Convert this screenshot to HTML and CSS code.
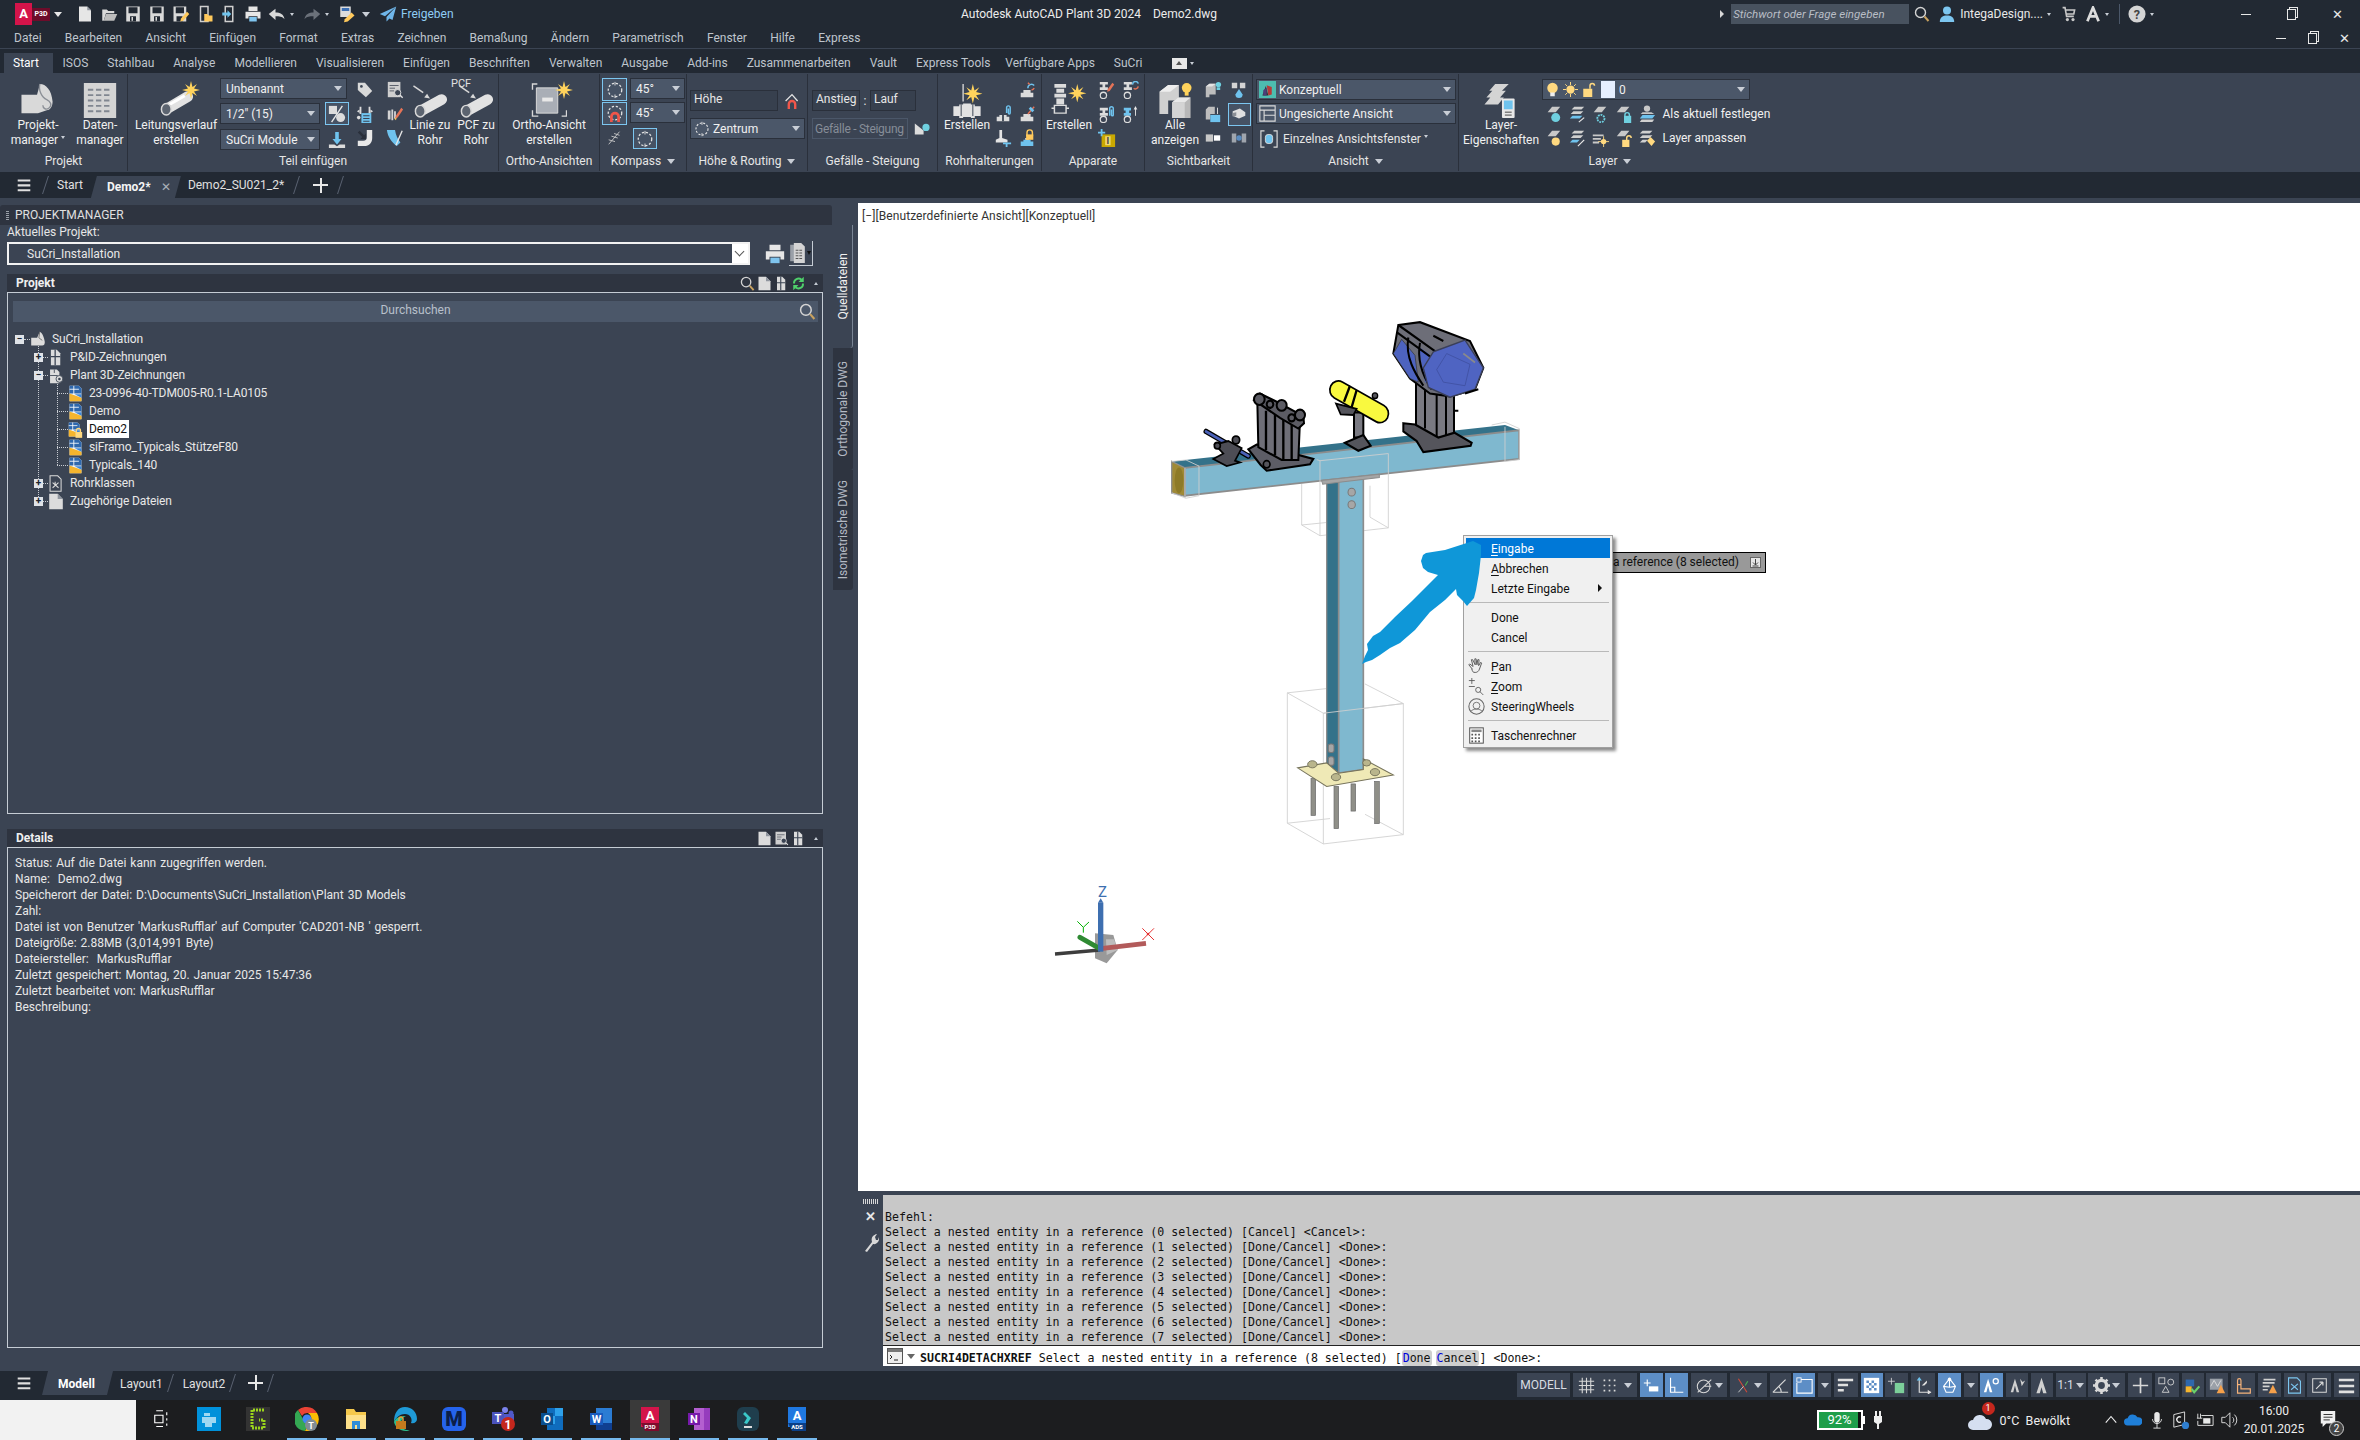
FILE: index.html
```html
<!DOCTYPE html>
<html lang="de">
<head>
<meta charset="utf-8">
<title>Autodesk AutoCAD Plant 3D 2024 Demo2.dwg</title>
<link rel="stylesheet" href="styles.css">
</head>
<body>
<svg class="sprite" xmlns="http://www.w3.org/2000/svg">
<symbol id="doc" viewBox="0 0 24 24"><path fill="#e6e6e6" d="M4 2h11l5 5v15H4z"/><path fill="#8f959e" d="M15 2v5h5z"/></symbol>
<symbol id="folder" viewBox="0 0 24 24"><path fill="#d9d9d9" d="M3 6h6l2 2h8v3H8L5 21H3z"/><path fill="#bdbdbd" d="M8 12h15l-4 9H5z"/></symbol>
<symbol id="save" viewBox="0 0 24 24"><path fill="#d9d9d9" d="M3 2h18v20H3z"/><path fill="#222933" d="M6 3h12v8H6zM8 15h8v7H8z"/><path fill="#d9d9d9" d="M10 16h2v5h-2z"/></symbol>
<symbol id="saveas" viewBox="0 0 24 24"><path fill="#d9d9d9" d="M2 2h17v20H2z"/><path fill="#222933" d="M5 3h11v8H5zM6 15h8v7H6z"/><path fill="#ffc95c" d="M12 18l8-9 3 3-8 9-4 1z"/></symbol>
<symbol id="phoneup" viewBox="0 0 24 24"><path fill="none" stroke="#cfcfcf" stroke-width="2" d="M6 2h10v20H6z"/><path fill="#ffc95c" d="M11 12h4l2 2h5v8H11z"/></symbol>
<symbol id="phonedn" viewBox="0 0 24 24"><path fill="none" stroke="#cfcfcf" stroke-width="2" d="M7 2h10v20H7z"/><path fill="#6fc3ee" d="M3 10h7V7l5 5-5 5v-3H3z"/></symbol>
<symbol id="print" viewBox="0 0 24 24"><path fill="#e6e6e6" d="M6 2h12v6H6zM2 9h20v9h-4v-3H6v3H2z"/><path fill="#7fc4ee" d="M7 16h10v6H7z"/></symbol>
<symbol id="undo" viewBox="0 0 24 24"><path fill="#d9d9d9" d="M10 5v5c6 0 11 2 12 9-3-4-7-4-12-4v5L1 12z"/></symbol>
<symbol id="redo" viewBox="0 0 24 24"><path fill="#6b717a" d="M14 5v5c-6 0-11 2-12 9 3-4 7-4 12-4v5l9-8z"/></symbol>
<symbol id="wsp" viewBox="0 0 24 24"><path fill="#dcdcdc" d="M3 2h14v14H3z"/><path fill="#3c6fb4" d="M5 4h10v4H5z"/><path fill="#ffc95c" d="M9 19l9-9 4 4-9 8-5 1z"/></symbol>
<symbol id="share" viewBox="0 0 24 24"><path fill="#6fb6ea" d="M23 2L1 12l7 3zM23 2L10 16v6l4-4 4 2z"/></symbol>
<symbol id="searchi" viewBox="0 0 16 16"><circle cx="6.500" cy="6.500" r="5" fill="none" stroke="#d4d4d4" stroke-width="1.400"/><path stroke="#c9a25f" stroke-width="2" d="M10.500 10.500l4 4.500"/></symbol>
<symbol id="person" viewBox="0 0 20 20"><circle cx="10" cy="5.500" r="5" fill="#7cc6f0"/><path fill="#7cc6f0" d="M1 20c0-6 4-8 9-8s9 2 9 8z"/></symbol>
<symbol id="cart" viewBox="0 0 20 20"><path fill="none" stroke="#c8c8c8" stroke-width="2" d="M2 2h3l2 11h9M6 5h11l-1 5H7"/><circle cx="8" cy="17" r="2" fill="#c8c8c8"/><circle cx="15" cy="17" r="2" fill="#c8c8c8"/></symbol>
<symbol id="adesk" viewBox="0 0 20 20"><path fill="none" stroke="#dcdcdc" stroke-width="3.400" d="M3 19L10 2l7 17M5 13h10"/></symbol>
<symbol id="helpc" viewBox="0 0 20 20"><circle cx="10" cy="10" r="9.500" fill="#d4d4d4"/></symbol>
<symbol id="star" viewBox="0 0 24 24"><path fill="#ffd35c" d="M12 0l2 8 6-4-4 6 8 2-8 2 4 6-6-4-2 8-2-8-6 4 4-6-8-2 8-2-4-6 6 4z"/></symbol>
<symbol id="roll" viewBox="0 0 36 36"><path fill="#d9d9d9" d="M1 12h16l3-11c6 0 12 6 13 18 0 6-3 9-6 9l-9 3H1z"/><path fill="none" stroke="#8b8f96" stroke-width="1.400" d="M20 1c-2 6 2 14 7 16 4 2 6 6 2 9-3 2-6 0-6-3"/></symbol>
<symbol id="grid" viewBox="0 0 26 26"><path fill="#d4d4d4" d="M1 0h24v26H1z"/><path stroke="#808690" stroke-width="1.400" stroke-dasharray="4 2" d="M4 5h18M4 9h18M4 13h18M4 17h18M4 21h18"/></symbol>
<symbol id="pipe" viewBox="0 0 36 36"><path stroke="#e2e2e2" stroke-width="11" stroke-linecap="round" d="M8 27L30 14"/><path stroke="#fff" stroke-width="3" d="M10 23l17-10"/><ellipse cx="8" cy="27" rx="5" ry="6" fill="#5c6470" stroke="#d8d8d8" stroke-width="1.500"/></symbol>
<symbol id="pipeline" viewBox="0 0 36 36"><path stroke="#d8d8d8" stroke-width="1.500" d="M1 3l10 7"/><path fill="#d8d8d8" d="M18 16l-6-1 3-4z"/><path stroke="#e2e2e2" stroke-width="11" stroke-linecap="round" d="M8 29L30 17"/><ellipse cx="8" cy="29" rx="5" ry="6" fill="#5c6470" stroke="#d8d8d8" stroke-width="1.500"/></symbol>
<symbol id="ortho" viewBox="0 0 36 36"><path fill="none" stroke="#d8d8d8" stroke-width="1.400" d="M1 7V1h5M31 34h5v-6M1 28v6h6"/><path fill="#a9aeb6" stroke="#dcdcdc" d="M5 5h22v26H5z"/><rect x="11" y="15" width="11" height="4" fill="#e8e8e8"/></symbol>
<symbol id="tag" viewBox="0 0 20 20"><path fill="#d9d9d9" d="M2 2h8l8 9-7 7-9-8z"/><circle cx="6" cy="6" r="1.500" fill="#3b4453"/></symbol>
<symbol id="dfind" viewBox="0 0 20 20"><path fill="#cfcfcf" d="M2 1h14v17H2z"/><path stroke="#505662" d="M4 5h10M4 8h6M4 11h5"/><circle cx="13" cy="13" r="3.500" fill="#3b4453" stroke="#e4e4e4"/><path stroke="#e4e4e4" stroke-width="1.500" d="M15.500 15.500l3 3"/></symbol>
<symbol id="docs" viewBox="0 0 18 24"><path fill="#9aa0a8" d="M1 3h10v18H1z"/><path fill="#d4d4d4" d="M5 1h8l4 4v18H5z"/><path stroke="#555" stroke-width="1.200" stroke-dasharray="3 1" d="M7 9h8M7 12h8M7 15h8M7 18h8"/></symbol>
<symbol id="half" viewBox="0 0 20 20"><rect x="1" y="1" width="9" height="9" fill="#dcdcdc"/><circle cx="14" cy="14" r="5" fill="#dcdcdc"/><path stroke="#e8e8e8" stroke-width="1.500" d="M16 1L4 19"/></symbol>
<symbol id="dist" viewBox="0 0 20 20"><path stroke="#dcdcdc" stroke-width="2" d="M5 2v8M15 2v8"/><path fill="#dcdcdc" d="M1 7l3-2v4zM19 7l-3-2v4z"/><path fill="#6fc3ee" d="M6 9h11v11H6z"/><path stroke="#3b4453" stroke-width="1.200" d="M8 12h7M8 15h7M8 18h7"/><circle cx="3" cy="14" r="2" fill="#dcdcdc"/></symbol>
<symbol id="pencil" viewBox="0 0 20 20"><path fill="#d4d4d4" d="M2 6h3v10H2zM6 5h2v12H6zM9 7h2v8H9z"/><path fill="#e57357" d="M11 12l6-9 2 2-6 9-3 1z"/><path fill="#ffc95c" d="M9 15l3-1-1 3z"/></symbol>
<symbol id="down" viewBox="0 0 20 20"><path fill="#6fc3ee" d="M8 1h4v8h3l-5 6-5-6h3z"/><path fill="#dcdcdc" d="M1 15h6l3 2 3-2h6v4H1z"/></symbol>
<symbol id="elbow" viewBox="0 0 20 20"><path fill="#e8e8e8" d="M12 1h6v9c0 5-3 9-9 9H2v-6h6c3 0 4-1 4-4z"/><path fill="#2a303b" d="M4 2l5 5 2-2v6H5l2-2-5-5z"/></symbol>
<symbol id="curve" viewBox="0 0 20 20"><path fill="#6fc3ee" d="M1 1h9c1 6 3 10 6 14l-4 4C6 14 2 9 1 1z"/><path stroke="#e8e8e8" stroke-width="1.500" d="M11 18l7-16"/></symbol>
<symbol id="comp" viewBox="0 0 20 20"><circle cx="10" cy="10" r="7.500" fill="none" stroke="#e4e4e4" stroke-width="1.400" stroke-dasharray="2.500 2"/><path stroke="#e4e4e4" d="M10 1v4M10 15v4"/></symbol>
<symbol id="compm" viewBox="0 0 20 20"><circle cx="10" cy="9" r="7.500" fill="none" stroke="#e4e4e4" stroke-width="1.400" stroke-dasharray="2.500 2"/><path fill="none" stroke="#f0564a" stroke-width="3" d="M6 19v-6a4 4 0 018 0v6"/></symbol>
<symbol id="snapc" viewBox="0 0 20 20"><path stroke="#c8c8c8" d="M3 17L15 3M3 12l7 2M6 8l7 2M9 5l6 2"/></symbol>
<symbol id="home" viewBox="0 0 20 20"><path fill="none" stroke="#e4e4e4" stroke-width="1.600" d="M2 10l8-8 7 8"/><path fill="none" stroke="#f0564a" stroke-width="3" d="M6 20v-6a4 4 0 018 0v6"/></symbol>
<symbol id="slope" viewBox="0 0 20 20"><path fill="#dcdcdc" d="M1 3l11 9v5H1z"/><circle cx="15" cy="8" r="4.500" fill="#6fd0e0"/></symbol>
<symbol id="hg" viewBox="0 0 36 36"><path stroke="#d8d8d8" stroke-width="1.400" d="M14 1v18"/><use href="#star" x="14" y="1" width="20" height="20"/><path fill="#e2e2e2" d="M4 24h6v-2h4v-1h8v1h4v2h6v10h-6v2h-4v-1h-8v1h-4v-2H4z"/><path stroke="#3b4453" d="M12 22v12M24 22v12"/></symbol>
<symbol id="eq" viewBox="0 0 36 36"><path fill="#dcdcdc" d="M3 1h12v4H3zM5 6h8v4H5zM3 11h12v4H3zM5 16h8v6H5z"/><path fill="none" stroke="#dcdcdc" stroke-width="1.500" d="M3 23h12v8H3zM0 26h3M15 26h3"/><use href="#star" x="17" y="1" width="19" height="19"/></symbol>
<symbol id="f1" viewBox="0 0 20 20"><path fill="#dcdcdc" d="M6 10h8v3h3v5H3v-5h3z"/><path fill="none" stroke="#6fc3ee" stroke-width="1.600" d="M11 8a4 4 0 017-3"/><path fill="none" stroke="#e57357" stroke-width="1.600" d="M18 8a4 4 0 01-3 2M11 2l2 2"/></symbol>
<symbol id="f2" viewBox="0 0 20 20"><path fill="#dcdcdc" d="M6 11h8v2h3v5H3v-5h3z"/><rect x="9" y="10" width="2" height="8" fill="#3b4453"/><path fill="none" stroke="#6fc3ee" stroke-width="1.600" d="M14 9V3a2 2 0 014 0v6a1 1 0 01-2 0V4"/></symbol>
<symbol id="f3" viewBox="0 0 20 20"><path fill="#dcdcdc" d="M6 10h8v3h3v5H3v-5h3z"/><path stroke="#e57357" stroke-width="1.600" d="M11 10l7-8"/><path stroke="#6fc3ee" stroke-width="3" d="M13 3l4 4"/></symbol>
<symbol id="f4" viewBox="0 0 20 20"><path fill="#e4e4e4" d="M6 1h3v9l6 2v3H2v-3l4-2z"/><path fill="#6fc3ee" d="M10 15h9v2h-4v3h-2v-3h-3z"/></symbol>
<symbol id="f5" viewBox="0 0 20 20"><path fill="#6fc3ee" d="M6 12h8v2h3v5H3v-5h3z"/><path fill="#dcdcdc" d="M8 10h4v2H8z"/><path fill="none" stroke="#ffc95c" stroke-width="1.600" d="M10 8V4a3 3 0 016 0v4"/><rect x="9" y="6" width="8" height="6" fill="#ffc95c"/></symbol>
<symbol id="v1" viewBox="0 0 20 20"><path fill="#dcdcdc" d="M2 1h9v3H8v3h3v3H2V7h3V4H2z"/><circle cx="6" cy="16" r="3.500" fill="none" stroke="#dcdcdc" stroke-width="1.400"/><path fill="#e57357" d="M11 9l5-7 2 2-5 7-3 1z"/></symbol>
<symbol id="v2" viewBox="0 0 20 20"><path fill="#dcdcdc" d="M2 1h9v3H8v3h3v3H2V7h3V4H2z"/><circle cx="6" cy="16" r="3.500" fill="none" stroke="#dcdcdc" stroke-width="1.400"/><path fill="none" stroke="#6fc3ee" stroke-width="1.600" d="M12 4a3 3 0 016-1"/><path fill="none" stroke="#e57357" stroke-width="1.600" d="M18 6a3 3 0 01-5 2"/></symbol>
<symbol id="v3" viewBox="0 0 20 20"><path fill="#dcdcdc" d="M2 3h9v3H8v3h3v3H2V9h3V6H2z"/><circle cx="6" cy="16" r="3.500" fill="none" stroke="#dcdcdc" stroke-width="1.400"/><path fill="none" stroke="#6fc3ee" stroke-width="1.600" d="M13 12V4a2 2 0 014 0v7a1 1 0 01-2 0V5"/></symbol>
<symbol id="v4" viewBox="0 0 20 20"><path fill="#6fc3ee" d="M2 3h8v3H8v3h2v3H2V9h2V6H2z"/><circle cx="6" cy="16" r="3.500" fill="none" stroke="#dcdcdc" stroke-width="1.400"/><path stroke="#e8e8e8" d="M15 12V4"/><path fill="#e8e8e8" d="M15 1l2 4h-4z"/></symbol>
<symbol id="vic" viewBox="0 0 20 20"><path fill="#c9a800" d="M4 6h15v14H4z"/><path fill="#f0d870" d="M8 8h6v10H8z"/><path fill="#6fc3ee" d="M3 0v3H0v2h3v3h2V5h3V3H5V0z"/></symbol>
<symbol id="cubes" viewBox="0 0 36 36"><path fill="#d0d0d0" d="M2 9l9-7h11v16H11v14H2z"/><path fill="#eee" d="M2 9l9-7h11l-9 7z"/><path fill="#b8b8b8" d="M15 20l6-5h13v21H15z"/><path fill="#e8e8e8" d="M15 20l6-5h13l-6 5z"/><path fill="#d4d4d4" d="M15 20h13v16H15z"/><circle cx="30" cy="5" r="5" fill="#ffd35c"/><path fill="#ffd35c" d="M28 9h4v4h-4z"/></symbol>
<symbol id="s1" viewBox="0 0 20 20"><path fill="#bdbdbd" d="M2 6l4-3h7v12H6v3H2z"/><path fill="#e4e4e4" d="M2 6l4-3h7l-4 3z"/><circle cx="16" cy="4" r="3" fill="#6fd0e0"/><path fill="#6fd0e0" d="M14 7h4v3h-4z"/></symbol>
<symbol id="s2" viewBox="0 0 20 20"><path fill="#d4d4d4" d="M2 2h6v6H2zM11 2h6v6h-6z"/><path fill="#6fc3ee" d="M10 9l4 6a4 4 0 01-8 0z"/></symbol>
<symbol id="s3" viewBox="0 0 20 20"><path fill="#bdbdbd" d="M2 5l3-3h7v8H7v6H2z"/><path fill="#6fc3ee" d="M7 11h11v8H7z"/><path stroke="#e8e8e8" d="M15 10V3"/></symbol>
<symbol id="s4" viewBox="0 0 20 20"><path fill="#e0e0e0" d="M3 7l8-3 6 4v4l-7 3-7-3z"/><path fill="#8b8f96" d="M3 9l4-1v4l-4 1z"/></symbol>
<symbol id="s5" viewBox="0 0 20 20"><path fill="#c8c8c8" d="M2 6h8v8H2z"/><path fill="#fff" d="M11 7h7v6h-7z"/></symbol>
<symbol id="s6" viewBox="0 0 20 20"><path fill="#9fa5ad" d="M2 5h5v10H2zM13 5h5v10h-5z"/><circle cx="10" cy="10" r="3" fill="#5a8cc0"/></symbol>
<symbol id="konz" viewBox="0 0 20 20"><rect width="20" height="20" fill="#4dbdb0"/><path fill="#333" d="M8 6l3 11H4z"/><path fill="#b83a3a" d="M9 5l6 2v9l-4 1z"/><path fill="#4c3f7a" d="M5 11l4-3v9H5z"/></symbol>
<symbol id="views" viewBox="0 0 20 20"><path fill="none" stroke="#dcdcdc" stroke-width="1.300" d="M1 1h18v18H1zM1 6h18M6 6v13M6 12h13"/></symbol>
<symbol id="vport" viewBox="0 0 20 20"><path fill="none" stroke="#dcdcdc" stroke-width="1.300" d="M5 1H1v18h4M15 1h4v18h-4"/><rect x="6" y="5" width="8" height="10" rx="3" fill="#6fc3ee" stroke="#dcdcdc"/></symbol>
<symbol id="layers" viewBox="0 0 36 36"><path fill="#d4d4d4" d="M6 8l6-7h14l-7 7zM3 15l6-7h14l-6 7zM1 22l6-7h14l-6 7z"/><rect x="19" y="16" width="13" height="20" rx="1" fill="#e8e8e8"/><rect x="21" y="18" width="9" height="9" fill="#6fc3ee"/><path stroke="#444" d="M22 30h7M22 33h7"/></symbol>
<symbol id="bulb" viewBox="0 0 20 20"><circle cx="10" cy="8" r="7" fill="#ffd980"/><path fill="#eee" d="M7 14h6v5H7z"/></symbol>
<symbol id="sun" viewBox="0 0 20 20"><circle cx="10" cy="10" r="5.500" fill="#ffd980"/><path stroke="#ffd980" stroke-width="1.300" d="M10 0v4M10 16v4M0 10h4M16 10h4M3 3l2.500 2.500M14.500 14.500L17 17M3 17l2.500-2.500M14.500 5.500L17 3"/></symbol>
<symbol id="lock" viewBox="0 0 20 20"><path fill="none" stroke="#ffd980" stroke-width="2" d="M12 9V5a3 3 0 016 0"/><rect x="3" y="9" width="12" height="11" fill="#ffd980"/></symbol>
<symbol id="lp" viewBox="0 0 20 20"><path fill="#c8c8c8" d="M4 8l5-6h9l-5 6z"/><circle cx="13" cy="14" r="5" fill="#6fd0e0"/></symbol>
<symbol id="lp2" viewBox="0 0 20 20"><path fill="#d0d0d0" d="M4 5l3-3h11l-3 3zM3 10l3-3h11l-3 3z"/><path fill="#6fc3ee" d="M2 15l3-3h11l-3 3z"/><path stroke="#e8e8e8" stroke-width="1.300" d="M12 19l6-5"/></symbol>
<symbol id="lp3" viewBox="0 0 20 20"><path fill="#c8c8c8" d="M3 8l5-6h9l-5 6z"/><circle cx="11" cy="15" r="4" fill="none" stroke="#6fd0e0" stroke-dasharray="2 1" stroke-width="2"/></symbol>
<symbol id="lp4" viewBox="0 0 20 20"><path fill="#c8c8c8" d="M2 8l5-6h9l-5 6z"/><path fill="none" stroke="#6fd0e0" stroke-width="1.600" d="M11 13V11a2.500 2.500 0 015 0v2"/><rect x="10" y="12" width="8" height="8" fill="#6fd0e0"/></symbol>
<symbol id="lp5" viewBox="0 0 20 20"><circle cx="10" cy="4" r="3.500" fill="#c8c8c8"/><path fill="#c8c8c8" d="M5 8h10l3 2H3z"/><path fill="#6fc3ee" d="M2 15l3-4h14l-3 4z"/><path fill="#d0d0d0" d="M2 19l2-3h14l-2 3z"/></symbol>
<symbol id="lp6" viewBox="0 0 20 20"><path fill="#c8c8c8" d="M4 8l5-6h9l-5 6z"/><circle cx="13" cy="14" r="4.500" fill="#ffd980"/></symbol>
<symbol id="lp7" viewBox="0 0 20 20"><path fill="#d0d0d0" d="M4 5l3-3h11l-3 3zM3 10l3-3h11l-3 3z"/><path fill="#6fc3ee" d="M2 15l3-3h8l-3 3z"/><path stroke="#e8e8e8" stroke-width="1.300" d="M11 19l7-7"/></symbol>
<symbol id="lp8" viewBox="0 0 20 20"><path fill="#c8c8c8" d="M2 6h12v2H2zM2 10h9v2H2zM2 14h7v2H2z"/><circle cx="14" cy="14" r="3" fill="#ffd980"/><path stroke="#ffd980" d="M14 8v12M8 14h12"/></symbol>
<symbol id="lp9" viewBox="0 0 20 20"><path fill="#c8c8c8" d="M2 8l5-6h9l-5 6z"/><path fill="none" stroke="#ffd980" stroke-width="1.600" d="M13 13v-3a2.500 2.500 0 015 0"/><rect x="8" y="12" width="8" height="8" fill="#ffd980"/></symbol>
<symbol id="lp10" viewBox="0 0 20 20"><path fill="#d0d0d0" d="M2 5l3-3h11l-3 3zM2 10l3-3h11l-3 3zM2 15l3-3h6l-3 3z"/><path fill="#ffd980" d="M10 13l4-4 5 5-4 5z"/></symbol>
<symbol id="t-roll" viewBox="0 0 18 20"><path fill="#dcdcdc" d="M1 8h7l3-7c3 1 5 6 6 12 0 3-1 4-3 4H1z"/><path fill="none" stroke="#666" d="M11 1l-1 7 4 3"/></symbol>
<symbol id="t-pid" viewBox="0 0 18 20"><path fill="#dcdcdc" d="M3 1h7l4 4v14H3z"/><path stroke="#3b4453" stroke-width="1.500" d="M8 1v18M3 9h11"/></symbol>
<symbol id="t-plant" viewBox="0 0 18 20"><path fill="#dcdcdc" d="M2 3h8l3 3v13H2z"/><path stroke="#3b4453" d="M7 3v4M2 10h9"/><circle cx="13" cy="14" r="4" fill="#dcdcdc" stroke="#3b4453"/><circle cx="13" cy="14" r="1.500" fill="#3b4453"/></symbol>
<symbol id="t-dwg" viewBox="0 0 16 20"><path fill="#eef2f7" d="M1 1h11l3 3v15H1z"/><path fill="#2f68ad" d="M1 1h11l3 3v6H1z"/><path stroke="#fff" d="M6 1v11M1 5h11"/><path fill="#f5b52e" d="M1 19V10l14 5v4z"/><path fill="#3b86d8" d="M7 11h8v4z"/></symbol>
<symbol id="t-lock" viewBox="0 0 18 20"><use href="#t-dwg" width="15" height="20"/><path fill="none" stroke="#ffd980" stroke-width="1.500" d="M10 13v-2a2.500 2.500 0 015 0v2"/><rect x="9" y="13" width="8" height="7" fill="#ffd980"/></symbol>
<symbol id="t-rohr" viewBox="0 0 18 20"><path fill="none" stroke="#dcdcdc" stroke-width="1.200" d="M2 1h9l4 4v14H2zM5 9l7 6M12 9l-7 6M8 8v4"/></symbol>
<symbol id="t-doc" viewBox="0 0 18 20"><path fill="#dcdcdc" d="M1 1h10l6 6v12H1z"/><path fill="#8f959e" d="M11 1v6h6z"/></symbol>
<symbol id="m-hand" viewBox="0 0 20 20"><path fill="none" stroke="#555" stroke-width="1.100" d="M5 13L1 8l1-1 4 3-2-8h1.500l3 6-.5-7h1.500l1 7 1-6h1.500l-.5 7 2.500-4 1 1-2.500 7c-1 3-3 4-5 4-3 0-3-1-4-4z"/></symbol>
<symbol id="m-zoom" viewBox="0 0 20 20"><path stroke="#555" d="M1 3h7M4.500 0v7M1 10h7"/><circle cx="12" cy="14" r="3" fill="none" stroke="#555"/><path stroke="#555" d="M14 16l4 4"/></symbol>
<symbol id="m-wheel" viewBox="0 0 20 20"><circle cx="10" cy="10" r="9" fill="none" stroke="#666" stroke-width="1.200"/><circle cx="10" cy="9" r="4" fill="none" stroke="#666"/><path fill="none" stroke="#666" d="M3 16c3-4 11-4 14 0"/></symbol>
<symbol id="m-calc" viewBox="0 0 20 20"><rect x="2" y="1" width="16" height="18" fill="#fff" stroke="#555" stroke-width="1.200"/><path fill="#888" d="M4 3h12v3H4z"/><path stroke="#555" stroke-width="2" stroke-dasharray="2 2" d="M4 9h12M4 13h12M4 17h12"/></symbol>
<symbol id="st-grid" viewBox="0 0 20 20"><path stroke="#d8d8d8" stroke-width="1.300" d="M5 1v18M10 1v18M15 1v18M1 5h18M1 10h18M1 15h18"/></symbol>
<symbol id="st-dots" viewBox="0 0 20 20"><path stroke="#d8d8d8" stroke-width="2" stroke-dasharray="2 4" d="M3 4h14M3 10h14M3 16h14"/></symbol>
<symbol id="st-dyn" viewBox="0 0 20 20"><path stroke="#fff" stroke-width="1.300" d="M5 3v8M1 7h8"/><rect x="7" y="11" width="11" height="6" fill="#fff"/></symbol>
<symbol id="st-ortho" viewBox="0 0 20 20"><path fill="none" stroke="#fff" stroke-width="1.300" d="M3 1v17h15M3 12h5v6"/></symbol>
<symbol id="st-polar" viewBox="0 0 20 20"><circle cx="9" cy="11" r="7.500" fill="none" stroke="#d8d8d8" stroke-width="1.200"/><path stroke="#d8d8d8" stroke-width="1.200" d="M2 18L18 3M9 11h9"/></symbol>
<symbol id="st-tr" viewBox="0 0 20 20"><path stroke="#d04a3a" stroke-width="1.300" d="M4 2l10 16"/><path stroke="#4caf50" stroke-width="1.300" d="M12 10l3-5"/><path stroke="#d8d8d8" d="M4 18l6-7"/></symbol>
<symbol id="st-ang" viewBox="0 0 20 20"><path fill="none" stroke="#d8d8d8" stroke-width="1.300" d="M1 18h18M1 18L16 3M11 18a10 10 0 00-3-7"/></symbol>
<symbol id="st-snap" viewBox="0 0 20 20"><path fill="none" stroke="#fff" stroke-width="1.300" d="M6 3h13v16H1V7"/><rect x="1" y="1" width="5" height="5" fill="none" stroke="#fff"/></symbol>
<symbol id="st-lines" viewBox="0 0 20 20"><path fill="#e0e0e0" d="M1 2h18v3H1zM1 8h12v3H1zM1 14h7v3H1z"/></symbol>
<symbol id="st-check" viewBox="0 0 20 20"><rect x="1" y="1" width="18" height="18" fill="#fff"/><path fill="#5d8ec6" d="M4 4h3v3H4zM10 4h3v3h-3zM7 7h3v3H7zM13 7h3v3h-3zM4 10h3v3H4zM10 10h3v3h-3zM7 13h3v3H7zM13 13h3v3h-3z"/></symbol>
<symbol id="st-add" viewBox="0 0 20 20"><path stroke="#d8d8d8" d="M4 1v8M0 5h8"/><rect x="8" y="7" width="11" height="12" fill="#7ccf9a"/></symbol>
<symbol id="st-mv" viewBox="0 0 20 20"><path fill="none" stroke="#e0e0e0" stroke-width="1.300" d="M5 2v16h14"/><path fill="#6fc3ee" d="M5 0l3 4H2z"/><path fill="#e0e0e0" d="M19 18l-4-3v6zM8 10l6-6v3l-3 3z"/></symbol>
<symbol id="st-gizmo" viewBox="0 0 20 20"><path fill="none" stroke="#fff" stroke-width="1.300" d="M10 2l7 9-3 7H6l-3-7zM10 2v10l-7-1M10 12l7-1"/><circle cx="10" cy="2.500" r="2" fill="#fff"/></symbol>
<symbol id="st-an1" viewBox="0 0 20 20"><path fill="#fff" d="M6 2l5 16H8L6 10l-2 8H1z"/><circle cx="15" cy="5" r="3" fill="none" stroke="#fff" stroke-width="1.500"/></symbol>
<symbol id="st-an2" viewBox="0 0 20 20"><path fill="#d0d0d0" d="M7 2l5 16H9L7 10l-2 8H2z"/><path fill="#d0d0d0" d="M13 2l3 4 3-2-4 7z"/></symbol>
<symbol id="st-an3" viewBox="0 0 20 20"><path fill="#d0d0d0" d="M10 1l6 18h-4l-2-7-2 7H4z"/></symbol>
<symbol id="st-gear" viewBox="0 0 20 20"><circle cx="10" cy="10" r="6" fill="none" stroke="#d8d8d8" stroke-width="4"/><path stroke="#d8d8d8" stroke-width="3" d="M10 0v4M10 16v4M0 10h4M16 10h4M3 3l2.500 2.500M14.500 14.500L17 17M3 17l2.500-2.500M14.500 5.500L17 3"/></symbol>
<symbol id="st-plus" viewBox="0 0 20 20"><path stroke="#d8d8d8" stroke-width="2" d="M10 1v18M1 10h18"/></symbol>
<symbol id="st-units" viewBox="0 0 20 20"><rect x="1" y="1" width="7" height="7" fill="none" stroke="#d8d8d8"/><circle cx="15" cy="6" r="3.500" fill="none" stroke="#d8d8d8"/><path fill="none" stroke="#d8d8d8" d="M5 18l4-7 4 7z"/></symbol>
<symbol id="st-tool" viewBox="0 0 20 20"><path fill="#2f68ad" d="M2 3h10v8H2z"/><path fill="#f5b52e" d="M2 11h7v7H2z"/><path stroke="#6bd06b" stroke-width="2.500" fill="none" d="M9 14l3 4 6-7"/></symbol>
<symbol id="st-warn1" viewBox="0 0 20 20"><path fill="#9aa0a8" d="M1 2h15v13H1z"/><path fill="none" stroke="#e0e0e0" d="M2 11l4-7 4 7 4-7"/><path fill="#f5a04a" d="M14 9l5 10H9z"/></symbol>
<symbol id="st-clip" viewBox="0 0 20 20"><path fill="none" stroke="#f5b27a" stroke-width="1.400" d="M3 6V4a2 2 0 014 0v10h11v5H3zM7 9h-4"/></symbol>
<symbol id="st-warn2" viewBox="0 0 20 20"><path fill="#d0d0d0" d="M3 2h14v2H3zM2 6h14v2H2zM2 10h8v2H2zM2 14h6v2H2z"/><path fill="#f5a04a" d="M14 9l5 10H9z"/></symbol>
<symbol id="st-file" viewBox="0 0 20 20"><path fill="none" stroke="#7cc6f0" stroke-width="1.300" d="M3 1h10l4 4v14H3zM6 8l8 7M14 8l-8 7"/></symbol>
<symbol id="st-full" viewBox="0 0 20 20"><path fill="none" stroke="#d8d8d8" stroke-width="1.200" d="M2 2h16v16H2z"/><path stroke="#d8d8d8" stroke-width="1.400" d="M6 14l8-8M14 6h-4M14 6v4"/></symbol>
<symbol id="st-ham" viewBox="0 0 20 20"><path fill="#e0e0e0" d="M1 2h18v3H1zM1 9h18v3H1zM1 16h18v3H1z"/></symbol>
<symbol id="refresh" viewBox="0 0 20 20"><path fill="none" stroke="#4fd06b" stroke-width="2.500" d="M4 10a6 6 0 0110-5M16 10a6 6 0 01-10 5"/><path fill="#4fd06b" d="M17 1v7h-7zM3 19v-7h7z"/></symbol>
<symbol id="b-chrome" viewBox="0 0 24 24"><path fill="#ea4335" d="M12 0a12 12 0 0110 6H12a6 6 0 00-5 3L3 3a12 12 0 019-3z"/><path fill="#34a853" d="M3 3l5 9a5 5 0 005 5l-3 7A12 12 0 013 3z"/><path fill="#fbbc05" d="M22 6a12 12 0 01-12 18l5-9a6 6 0 00-2-9z"/><circle cx="12" cy="12" r="4.500" fill="#4285f4"/><circle cx="16" cy="18" r="6" fill="#7f8c95"/></symbol>
<symbol id="b-folder" viewBox="0 0 24 24"><path fill="#f5c84c" d="M2 2h8l2 3h10v17H2z"/><path fill="#fde08a" d="M2 8h20v14H2z"/><path fill="#2f8dd8" d="M8 14h8v8h-3v-4h-2v4H8z"/></symbol>
<symbol id="b-edge" viewBox="0 0 24 24"><path fill="#1f9ad6" d="M12 0c7 0 12 5 12 12 0 3-3 5-6 4 2-4-1-9-6-9-6 0-10 5-11 8C1 6 5 0 12 0z"/><path fill="#2ebf8c" d="M1 15c1 5 6 9 12 9 1 0 3 0 4-1-5 1-9-2-9-7 0-3 2-6 5-7-6 0-11 2-12 6z"/><rect x="3" y="14" width="10" height="8" fill="#c47a1d"/><path fill="none" stroke="#e0a040" stroke-width="1.500" d="M6 14v-2a2 2 0 014 0v2"/></symbol>
<symbol id="b-teams" viewBox="0 0 24 24"><circle cx="14" cy="3" r="3" fill="#7b83eb"/><circle cx="20" cy="6" r="2.500" fill="#5059c9"/><path fill="#5059c9" d="M12 7h11v9H12z"/><rect x="1" y="5" width="12" height="12" fill="#4b53bc"/><circle cx="17" cy="17" r="7" fill="#c4271d"/></symbol>
<symbol id="b-out" viewBox="0 0 24 24"><path fill="#0f6cbd" d="M7 1h16v22H7z"/><path fill="#2ea1ea" d="M15 1h8v8h-8zM7 9h8v8H7z"/><rect x="1" y="6" width="12" height="12" fill="#0a4f8f"/></symbol>
<symbol id="b-word" viewBox="0 0 24 24"><path fill="#2b7cd3" d="M7 1h16v22H7z"/><path fill="#103f91" d="M7 16h16v7H7z"/><rect x="1" y="6" width="13" height="12" fill="#185abd"/></symbol>
<symbol id="b-cad" viewBox="0 0 24 24"><path fill="#d4144a" d="M3 0h18v20H3z"/><path fill="#7c0c2d" d="M3 16h18v8H7z"/></symbol>
<symbol id="b-one" viewBox="0 0 24 24"><path fill="#b45fd0" d="M7 1h16v22H7z"/><path fill="#7719aa" d="M17 1h6v22h-6z" opacity=".5"/><rect x="1" y="6" width="12" height="12" fill="#7719aa"/></symbol>
<symbol id="b-arr" viewBox="0 0 24 24"><rect x="1" y="0" width="22" height="24" rx="6" fill="#1f3e4d"/><path fill="#3ac9c9" d="M9 5l6 6-4 6-3-1 3-5-4-4z"/><rect x="8" y="19" width="8" height="2" fill="#ddd"/></symbol>
<symbol id="b-ads" viewBox="0 0 24 24"><path fill="#1f78e0" d="M3 0h18v20H3z"/><path fill="#0b3f86" d="M3 16h18v8H7z"/></symbol>
</svg>

<div class="app">
<header class="titlebar">
  <div class="qat">
    <div class="logo"><span class="logo-a">A</span><span class="logo-p">P3D</span></div>
    <span class="caret caret-w logo-caret"></span>
    <svg class="q q-first"><use href="#doc"/></svg>
    <svg class="q"><use href="#folder"/></svg>
    <svg class="q"><use href="#save"/></svg>
    <svg class="q"><use href="#save"/></svg>
    <svg class="q"><use href="#saveas"/></svg>
    <svg class="q"><use href="#phoneup"/></svg>
    <svg class="q"><use href="#phonedn"/></svg>
    <svg class="q"><use href="#print"/></svg>
    <svg class="q"><use href="#undo"/></svg>
    <span class="caret caret-s"></span>
    <svg class="q"><use href="#redo"/></svg>
    <span class="caret caret-s"></span>
    <svg class="q"><use href="#wsp"/></svg>
    <span class="caret caret-bar"></span>
    <svg class="q q-share"><use href="#share"/></svg>
    <span class="freigeben">Freigeben</span>
  </div>
  <div class="apptitle">Autodesk AutoCAD Plant 3D 2024&nbsp;&nbsp;&nbsp;&nbsp;Demo2.dwg</div>
  <div class="tright">
    <span class="tri-r"></span>
    <div class="helpbox">Stichwort oder Frage eingeben</div>
    <svg class="ti ti-search"><use href="#searchi"/></svg>
    <svg class="ti ti-person"><use href="#person"/></svg>
    <span class="user">IntegaDesign....</span>
    <span class="caret caret-s"></span>
    <svg class="ti ti-cart"><use href="#cart"/></svg>
    <svg class="ti ti-ad"><use href="#adesk"/></svg>
    <span class="caret caret-s"></span>
    <span class="vsep"></span>
    <svg class="ti ti-help" viewBox="0 0 20 20"><use href="#helpc"/><text x="10" y="15" class="ltr lt14 dk">?</text></svg>
    <span class="caret caret-s"></span>
    <div class="winbtns">
      <span class="wmin"></span><span class="wrest"></span><span class="wclose">✕</span>
    </div>
  </div>
</header>

<nav class="menubar">
  <span>Datei</span><span>Bearbeiten</span><span>Ansicht</span><span>Einfügen</span><span>Format</span><span>Extras</span><span>Zeichnen</span><span>Bemaßung</span><span>Ändern</span><span>Parametrisch</span><span>Fenster</span><span>Hilfe</span><span>Express</span>
  <div class="winbtns winbtns-doc"><span class="wmin"></span><span class="wrest"></span><span class="wclose">✕</span></div>
</nav>

<nav class="tabs">
  <span class="tab active">Start</span><span class="tab">ISOS</span><span class="tab">Stahlbau</span><span class="tab">Analyse</span><span class="tab">Modellieren</span><span class="tab">Visualisieren</span><span class="tab">Einfügen</span><span class="tab">Beschriften</span><span class="tab">Verwalten</span><span class="tab">Ausgabe</span><span class="tab">Add-ins</span><span class="tab">Zusammenarbeiten</span><span class="tab">Vault</span><span class="tab">Express Tools</span><span class="tab">Verfügbare Apps</span><span class="tab">SuCri</span>
  <span class="tabtoggle"><span class="tt-box"><span class="tri-u"></span></span><span class="caret caret-s"></span></span>
</nav>

<section class="ribbon">
  <div class="panel p-projekt">
    <div class="pbody">
      <div class="big w62 first"><svg class="bigi"><use href="#roll"/></svg><span>Projekt-</span><span>manager<i class="caret caret-xs"></i></span></div>
      <div class="big w62"><svg class="bigi"><use href="#grid"/></svg><span>Daten-</span><span>manager</span></div>
    </div>
    <div class="plabel">Projekt</div>
  </div>
  <div class="panel p-teil">
    <div class="pbody">
      <div class="big w88"><span class="stack"><svg class="bigi"><use href="#pipe"/></svg><svg class="overstar"><use href="#star"/></svg></span><span>Leitungsverlauf</span><span>erstellen</span></div>
      <div class="combos">
        <div class="combo c127">Unbenannt<i class="caret"></i></div>
        <div class="comborow"><div class="combo c100">1/2" (15)<i class="caret"></i></div><span class="tb on"><svg><use href="#half"/></svg></span></div>
        <div class="comborow"><div class="combo c100">SuCri Module<i class="caret"></i></div><span class="tb"><svg><use href="#down"/></svg></span></div>
      </div>
      <div class="ig c30">
        <svg><use href="#tag"/></svg><svg><use href="#dfind"/></svg>
        <svg><use href="#dist"/></svg><svg><use href="#pencil"/></svg>
        <svg><use href="#elbow"/></svg><svg><use href="#curve"/></svg>
      </div>
      <div class="big w46"><svg class="bigi"><use href="#pipeline"/></svg><span>Linie zu</span><span>Rohr</span></div>
      <div class="big w46"><span class="stack"><svg class="bigi"><use href="#pipeline"/></svg><span class="pcf">PCF</span></span><span>PCF zu</span><span>Rohr</span></div>
    </div>
    <div class="plabel">Teil einfügen</div>
  </div>
  <div class="panel p-ortho">
    <div class="pbody">
      <div class="big w100"><span class="stack"><svg class="bigi"><use href="#ortho"/></svg><svg class="overstar"><use href="#star"/></svg></span><span>Ortho-Ansicht</span><span>erstellen</span></div>
    </div>
    <div class="plabel">Ortho-Ansichten</div>
  </div>
  <div class="panel p-komp">
    <div class="pbody komp">
      <span class="tb on k"><svg><use href="#comp"/></svg></span><div class="combo c55">45°<i class="caret"></i></div>
      <span class="tb on k"><svg><use href="#compm"/></svg></span><div class="combo c55">45°<i class="caret"></i></div>
      <span class="tb k"><svg><use href="#snapc"/></svg></span><span class="tb on k2"><svg><use href="#comp"/></svg></span>
    </div>
    <div class="plabel">Kompass<i class="caret caret-l"></i></div>
  </div>
  <div class="panel p-hoehe">
    <div class="pbody stackcol">
      <div class="hrow"><div class="inp i88">Höhe</div><svg class="ri"><use href="#home"/></svg></div>
      <div class="combo c115 gap7"><svg class="ri ri-z"><use href="#comp"/></svg>Zentrum<i class="caret"></i></div>
    </div>
    <div class="plabel">Höhe &amp; Routing<i class="caret caret-l"></i></div>
  </div>
  <div class="panel p-gef">
    <div class="pbody stackcol">
      <div class="hrow"><div class="inp i48">Anstieg</div><span class="colon">:</span><div class="inp i46">Lauf</div></div>
      <div class="hrow gap7"><div class="combo c96 dis">Gefälle - Steigung</div><svg class="ri"><use href="#slope"/></svg></div>
    </div>
    <div class="plabel">Gefälle - Steigung</div>
  </div>
  <div class="panel p-rohrh">
    <div class="pbody">
      <div class="big w58"><svg class="bigi"><use href="#hg"/></svg><span>Erstellen</span></div>
      <div class="ig c24">
        <span></span><svg><use href="#f1"/></svg>
        <svg><use href="#f2"/></svg><svg><use href="#f3"/></svg>
        <svg><use href="#f4"/></svg><svg><use href="#f5"/></svg>
      </div>
    </div>
    <div class="plabel">Rohrhalterungen</div>
  </div>
  <div class="panel p-app">
    <div class="pbody">
      <div class="big w54"><svg class="bigi"><use href="#eq"/></svg><span>Erstellen</span></div>
      <div class="ig c24">
        <svg><use href="#v1"/></svg><svg><use href="#v2"/></svg>
        <svg><use href="#v3"/></svg><svg><use href="#v4"/></svg>
        <svg viewBox="0 0 20 20"><use href="#vic"/><text x="11" y="17" class="ltr lt10 dk">I</text></svg><span></span>
      </div>
    </div>
    <div class="plabel">Apparate</div>
  </div>
  <div class="panel p-sicht">
    <div class="pbody">
      <div class="big w56"><svg class="bigi"><use href="#cubes"/></svg><span>Alle</span><span>anzeigen</span></div>
      <div class="ig c26">
        <svg><use href="#s1"/></svg><svg><use href="#s2"/></svg>
        <svg><use href="#s3"/></svg><span class="tb on sq"><svg><use href="#s4"/></svg></span>
        <svg><use href="#s5"/></svg><svg><use href="#s6"/></svg>
      </div>
    </div>
    <div class="plabel">Sichtbarkeit</div>
  </div>
  <div class="panel p-ansicht">
    <div class="pbody stackcol ans">
      <div class="combo c200"><svg class="ri ri-k"><use href="#konz"/></svg>Konzeptuell<i class="caret"></i></div>
      <div class="combo c200 gap3"><svg class="ri ri-k"><use href="#views"/></svg>Ungesicherte Ansicht<i class="caret"></i></div>
      <div class="vprow"><svg class="ri ri-v"><use href="#vport"/></svg>Einzelnes Ansichtsfenster<i class="caret caret-xs"></i></div>
    </div>
    <div class="plabel">Ansicht<i class="caret caret-l"></i></div>
  </div>
  <div class="panel p-layer">
    <div class="pbody">
      <div class="big w84"><svg class="bigi"><use href="#layers"/></svg><span>Layer-</span><span>Eigenschaften</span></div>
      <div class="lcol">
        <div class="combo c208"><svg class="ri ri-l"><use href="#bulb"/></svg><svg class="ri ri-l"><use href="#sun"/></svg><svg class="ri ri-l"><use href="#lock"/></svg><span class="swatch"></span>0<i class="caret"></i></div>
        <div class="lrow"><svg><use href="#lp"/></svg><svg><use href="#lp2"/></svg><svg><use href="#lp3"/></svg><svg><use href="#lp4"/></svg><svg><use href="#lp5"/></svg><span>Als aktuell festlegen</span></div>
        <div class="lrow"><svg><use href="#lp6"/></svg><svg><use href="#lp7"/></svg><svg><use href="#lp8"/></svg><svg><use href="#lp9"/></svg><svg><use href="#lp10"/></svg><span>Layer anpassen</span></div>
      </div>
    </div>
    <div class="plabel">Layer<i class="caret caret-l"></i></div>
  </div>
</section>

<nav class="filetabs">
  <svg class="ham"><use href="#st-ham"/></svg>
  <i class="slash"></i>
  <span class="ft">Start</span>
  <span class="ft ft-active">Demo2*<b>✕</b></span>
  <span class="ft ft-3">Demo2_SU021_2*</span>
  <i class="slash"></i>
  <span class="ftplus"></span>
  <i class="slash"></i>
</nav>

<main class="main">
  <aside class="pm">
    <div class="pm-title"><i class="grip"></i>PROJEKTMANAGER</div>
    <div class="pm-body">
      <div class="pm-left">
        <div class="cur">Aktuelles Projekt:</div>
        <div class="cur-row">
          <div class="prj-combo"><span>SuCri_Installation</span><b class="chev"></b></div>
          <svg class="pi pi-p"><use href="#print"/></svg>
          <div class="pi-fly"><svg class="pi-d"><use href="#docs"/></svg><i class="caret caret-k"></i></div>
        </div>
        <div class="sect"><b>Projekt</b>
          <div class="sect-ic">
            <svg><use href="#searchi"/></svg><svg><use href="#t-doc"/></svg><svg><use href="#t-pid"/></svg><svg><use href="#refresh"/></svg><i class="tri-mini"></i>
          </div>
        </div>
        <div class="box box-tree">
          <div class="findbar"><span>Durchsuchen</span><svg><use href="#searchi"/></svg></div>
          <div class="tree">
            <div class="row l0"><i class="exp">−</i><i class="dh d6"></i><svg class="ti16"><use href="#t-roll"/></svg><span>SuCri_Installation</span></div>
            <div class="branch b1">
              <div class="row l1"><i class="exp">+</i><i class="dh d5"></i><svg class="ti16"><use href="#t-pid"/></svg><span>P&amp;ID-Zeichnungen</span></div>
              <div class="row l1"><i class="exp">−</i><i class="dh d5"></i><svg class="ti16"><use href="#t-plant"/></svg><span>Plant 3D-Zeichnungen</span></div>
              <div class="branch b2">
                <div class="row l2"><i class="dh d11"></i><svg class="ti15"><use href="#t-dwg"/></svg><span>23-0996-40-TDM005-R0.1-LA0105</span></div>
                <div class="row l2"><i class="dh d11"></i><svg class="ti15"><use href="#t-dwg"/></svg><span>Demo</span></div>
                <div class="row l2"><i class="dh d11"></i><svg class="ti15"><use href="#t-lock"/></svg><span class="sel">Demo2</span></div>
                <div class="row l2"><i class="dh d11"></i><svg class="ti15"><use href="#t-dwg"/></svg><span>siFramo_Typicals_StützeF80</span></div>
                <div class="row l2"><i class="dh d11"></i><svg class="ti15"><use href="#t-dwg"/></svg><span>Typicals_140</span></div>
              </div>
              <div class="row l1"><i class="exp">+</i><i class="dh d5"></i><svg class="ti16"><use href="#t-rohr"/></svg><span>Rohrklassen</span></div>
              <div class="row l1"><i class="exp">+</i><i class="dh d5"></i><svg class="ti16"><use href="#t-doc"/></svg><span>Zugehörige Dateien</span></div>
            </div>
          </div>
        </div>
        <div class="sect sect-d"><b>Details</b>
          <div class="sect-ic"><svg><use href="#t-doc"/></svg><svg><use href="#dfind"/></svg><svg><use href="#t-pid"/></svg><i class="tri-mini"></i></div>
        </div>
        <div class="box box-det">
          <p>Status: Auf die Datei kann zugegriffen werden.</p>
          <p>Name:&nbsp; Demo2.dwg</p>
          <p>Speicherort der Datei: D:\Documents\SuCri_Installation\Plant 3D Models</p>
          <p>Zahl:</p>
          <p>Datei ist von Benutzer 'MarkusRufflar' auf Computer 'CAD201-NB ' gesperrt.</p>
          <p>Dateigröße: 2.88MB (3,014,991 Byte)</p>
          <p>Dateiersteller:&nbsp; MarkusRufflar</p>
          <p>Zuletzt gespeichert: Montag, 20. Januar 2025 15:47:36</p>
          <p>Zuletzt bearbeitet von: MarkusRufflar</p>
          <p>Beschreibung:</p>
        </div>
      </div>
      <div class="pm-tabs">
        <div class="vt vt-on"><span>Quelldateien</span></div>
        <div class="vt"><span>Orthogonale DWG</span></div>
        <div class="vt vt-3"><span>Isometrische DWG</span></div>
      </div>
    </div>
  </aside>

  <div class="work">
    <div class="viewport">
      <div class="vp-label">[−][Benutzerdefinierte Ansicht][Konzeptuell]</div>
      <svg class="canvas" viewBox="858 203 1502 988" xmlns="http://www.w3.org/2000/svg">
        <g transform="translate(1100 300) scale(.33333 .35714)">
          <g fill="none" stroke="#cfcfcf" stroke-width="2.500">
            <path d="M562 1100L670 1157 910 1130 795 1075M562 1100L680 1088M562 1100V1465L670 1523 910 1497V1130M670 1157V1523M562 1465L690 1452M795 1440L910 1497"/>
            <path d="M605 515V630L660 660M810 520V608L865 638M605 630L680 623"/>
          </g>
          <path fill="#34728a" d="M215 452L1215 350 1257 365 255 470z"/>
          <path fill="#a08a36" stroke="#8f8f8f" stroke-width="4" d="M215 452L255 470V550L215 540z"/>
          <ellipse cx="237" cy="505" rx="13" ry="36" fill="#8d7a28"/>
          <path fill="#7fb8cf" stroke="#8c8c8c" stroke-width="5" d="M255 470L1257 365V445L255 548z"/>
          <g fill="none" stroke="#cfcfcf" stroke-width="2.500">
            <path d="M215 452L258 448 297 465V548L258 555 215 540M255 470V555"/>
            <path d="M1175 350L1215 342 1258 360V447L1215 452V355"/>
            <path d="M660 450L865 430V638L660 660V450M650 447L660 450"/>
          </g>
          <path fill="#34728a" stroke="#8c8c8c" stroke-width="4" d="M680 510L716 505V1325L680 1300z"/>
          <path fill="#7fb8cf" stroke="#8c8c8c" stroke-width="5" d="M716 505L790 500V1315L716 1325z"/>
          <path fill="#a5a5a5" stroke="#8c8c8c" stroke-width="3" d="M665 505L838 488V497L668 516z"/>
          <g fill="#a6a6a6" stroke="#777" stroke-width="3">
            <circle cx="755" cy="538" r="11"/><circle cx="755" cy="573" r="11"/>
            <rect x="685" y="1243" width="17" height="24" rx="6"/><rect x="685" y="1279" width="17" height="24" rx="6"/>
          </g>
          <path fill="none" stroke="#cfcfcf" stroke-width="2.500" d="M670 1157L910 1130"/>
          <g fill="#8f8f88" stroke="#6a6a6a" stroke-width="2">
            <rect x="633" y="1340" width="14" height="103"/><rect x="753" y="1355" width="14" height="76"/>
            <rect x="824" y="1348" width="14" height="118"/><rect x="702" y="1362" width="14" height="118"/>
          </g>
          <path fill="#efe9b6" stroke="#77745c" stroke-width="3" d="M593 1310L680 1296 716 1325 790 1315V1285L880 1330 680 1362z"/>
          <g fill="#b9b58c" stroke="#6e6b55" stroke-width="2.500">
            <ellipse cx="637" cy="1300" rx="14" ry="10"/><ellipse cx="825" cy="1322" rx="14" ry="10"/><ellipse cx="708" cy="1336" rx="14" ry="10"/><ellipse cx="800" cy="1296" rx="12" ry="9"/>
          </g>

          <path fill="none" stroke="#000" stroke-width="15" stroke-linecap="round" d="M318 368L445 437"/>
          <path fill="none" stroke="#4b62b8" stroke-width="8" stroke-linecap="round" d="M318 368L445 437"/>
          <path fill="#4d4d55" stroke="#000" stroke-width="5" d="M345 405L385 395 425 415 405 450 420 455 380 465 340 445 370 430z"/>
          <circle cx="408" cy="392" r="11" fill="#4d4d55" stroke="#000" stroke-width="5"/>
          <circle cx="352" cy="408" r="9" fill="#4d4d55" stroke="#000" stroke-width="5"/>

          <path fill="#5d5d66" stroke="#000" stroke-width="6" d="M480 405L640 445 630 460 500 478 482 462 445 418 470 405z"/>
          <circle cx="500" cy="460" r="10" fill="#55555c" stroke="#000" stroke-width="5"/>
          <path fill="#6f6f78" stroke="#000" stroke-width="6" d="M472 285L600 335 595 448 545 448 475 412z"/>
          <path fill="none" stroke="#000" stroke-width="7" d="M498 310V420M525 320V435M550 330V445M575 335V445"/>
          <g fill="#5c5c64" stroke="#000" stroke-width="6">
            <path d="M462 280L480 262 530 285 610 325 612 345 595 360 540 330z"/>
            <circle cx="478" cy="278" r="16"/><circle cx="545" cy="295" r="15"/><circle cx="600" cy="322" r="15"/><circle cx="510" cy="292" r="10"/><circle cx="575" cy="330" r="10"/>
          </g>

          <path fill="#7a7a82" stroke="#000" stroke-width="6" d="M762 315H790V385H762z"/>
          <path fill="#55555c" stroke="#000" stroke-width="6" d="M735 400L790 378 812 408 775 422z"/>
          <path fill="none" stroke="#000" stroke-width="56" stroke-linecap="round" d="M715 252L840 318"/>
          <path fill="none" stroke="#f9f93f" stroke-width="46" stroke-linecap="round" d="M715 252L840 318"/>
          <path fill="none" stroke="#000" stroke-width="7" d="M750 240L732 285M770 252L755 300"/>
          <path fill="#55555c" stroke="#000" stroke-width="5" d="M708 290L770 305 760 322 722 320z"/>
          <circle cx="825" cy="268" r="8" fill="#55555c" stroke="#000" stroke-width="4"/>

          <path fill="#55555c" stroke="#000" stroke-width="6" d="M910 345L960 350 1060 370 1115 400 1112 408 970 426 950 395 910 368z"/>
          <path fill="#7a7a82" stroke="#000" stroke-width="6" d="M948 230L1062 265V372L1015 385 948 350z"/>
          <path fill="none" stroke="#000" stroke-width="6" d="M975 240V360M1010 250V382M1038 260V378M1060 310H1075"/>
          <path fill="#6d6e78" stroke="#000" stroke-width="6" d="M895 70L960 62 1110 115 1150 190 1125 250 1050 270 990 262 930 220 880 150z"/>
          <path fill="#4d63bf" stroke="#333" stroke-width="2" d="M905 110L945 155 955 230 930 220 880 150z"/>
          <path fill="#4d63bf" d="M955 130L985 150 1000 240 975 230z"/>
          <path fill="none" stroke="#000" stroke-width="6" d="M895 70L1030 160M890 90L1000 165M925 105C915 160 945 205 970 240M960 120C950 170 970 215 995 250"/>
          <path fill="#4f64c2" stroke="#3a3f58" stroke-width="4" d="M1000 145L1095 112 1150 190 1125 250 1050 272 985 245 970 190z"/>
          <path fill="none" stroke="#3c4c9a" stroke-width="2" d="M1040 150L1110 180 1095 240 1030 230 1010 195z"/>
          <path stroke="#8a8a8a" stroke-width="5" d="M1090 150L1125 175"/>
          <path fill="none" stroke="#000" stroke-width="6" d="M1000 100L1030 115M1095 262L1135 250"/>
        </g>
        <g transform="translate(1040 900) scale(.33333)">
          <path fill="#999" d="M165 100L220 105 233 150 200 190 165 175z"/>
          <path fill="#bdbdbd" d="M198 118H222L233 150 200 165z"/>
          <path stroke="#3d3d3d" stroke-width="10" d="M45 162L180 150"/>
          <path stroke="#2f8a33" stroke-width="15" stroke-linecap="round" d="M120 112L178 145"/>
          <path stroke="#b25a5a" stroke-width="14" d="M188 145L318 130"/>
          <path stroke="#3e6fb0" stroke-width="16" d="M182 8V155"/>
          <path fill="#3e6fb0" d="M174 8L182 -5 190 8z"/>
          <path fill="none" stroke="#00b000" stroke-width="3" d="M112 64L130 82 147 66M130 82V98"/>
          <path stroke="#e53030" stroke-width="3" d="M307 85L342 120M342 85L307 120"/>
          <circle cx="324" cy="102" r="4" fill="#e53030"/>
        </g>
        <text x="1098" y="897" class="zlabel">Z</text>
      </svg>
      <div class="dyn">a reference (8 selected)<svg class="dyn-b" viewBox="0 0 11 11"><rect x=".5" y=".5" width="10" height="10" fill="#e6e6e6" stroke="#666"/><path stroke="#444" d="M5.500 2v6M3 5.500l2.500 2.500L8 5.500M2.500 9h6" fill="none"/></svg></div>
      <div class="ctx">
        <div class="ci hot"><u>E</u>ingabe</div>
        <div class="ci"><u>A</u>bbrechen</div>
        <div class="ci">Letzte Eingabe<i class="tri-r tri-k"></i></div>
        <hr>
        <div class="ci">Done</div>
        <div class="ci">Cancel</div>
        <hr>
        <div class="ci"><svg><use href="#m-hand"/></svg><u>P</u>an</div>
        <div class="ci"><svg><use href="#m-zoom"/></svg><u>Z</u>oom</div>
        <div class="ci"><svg><use href="#m-wheel"/></svg>SteeringWheels</div>
        <hr>
        <div class="ci"><svg><use href="#m-calc"/></svg>Taschenrechner</div>
      </div>
      <svg class="canvas" viewBox="858 203 1502 988" xmlns="http://www.w3.org/2000/svg">
        <path fill="#0f97d8" d="M1362 664L1365 656 1368 650 1367 644 1373 636 1380 632 1395 617 1412 601 1438 575 1428 572 1423 568 1421 561 1423 555 1426 553 1445 550 1473 541 1481 545 1481 555 1479 573 1476 590 1474 598 1467 606 1463 601 1457 595 1456 589 1445 600 1430 612 1415 630 1400 643 1390 648 1380 655 1372 660 1366 662z"/>
      </svg>
    </div>
    <div class="cmd">
      <div class="cmd-strip">
        <i class="cmd-grip"></i>
        <span class="cmd-x">✕</span>
        <svg class="cmd-w" viewBox="0 0 16 20"><path fill="#d8d8d8" d="M2 19l7-9c-1-3 0-7 5-8l-2 3 1 3 2 0 1-3c1 4-2 8-6 7l-6 8z"/></svg>
      </div>
      <div class="cmd-main">
        <div class="hist">
          <div>Befehl:</div>
          <div>Select a nested entity in a reference (0 selected) [Cancel] &lt;Cancel&gt;:</div>
          <div>Select a nested entity in a reference (1 selected) [Done/Cancel] &lt;Done&gt;:</div>
          <div>Select a nested entity in a reference (2 selected) [Done/Cancel] &lt;Done&gt;:</div>
          <div>Select a nested entity in a reference (3 selected) [Done/Cancel] &lt;Done&gt;:</div>
          <div>Select a nested entity in a reference (4 selected) [Done/Cancel] &lt;Done&gt;:</div>
          <div>Select a nested entity in a reference (5 selected) [Done/Cancel] &lt;Done&gt;:</div>
          <div>Select a nested entity in a reference (6 selected) [Done/Cancel] &lt;Done&gt;:</div>
          <div>Select a nested entity in a reference (7 selected) [Done/Cancel] &lt;Done&gt;:</div>
        </div>
        <div class="cmdline">
          <svg class="cl-i" viewBox="0 0 16 16"><rect x=".5" y=".5" width="15" height="15" fill="#eee" stroke="#555"/><rect x="1" y="1" width="14" height="3" fill="#777"/><path fill="none" stroke="#222" d="M3 7l2 2-2 2M7 12h4"/></svg>
          <i class="caret caret-g"></i>
          <span class="cl-t"><b>SUCRI4DETACHXREF</b> Select a nested entity in a reference (8 selected) [<span class="kw"><em>D</em>one</span><span class="kw kw2"><em>C</em>ancel</span>] &lt;Done&gt;:</span>
        </div>
      </div>
    </div>
  </div>
</main>

<footer class="statusbar">
  <svg class="ham ham-s"><use href="#st-ham"/></svg>
  <span class="lt lt-on">Modell</span>
  <span class="lt lt-1">Layout1</span><i class="slash s2"></i>
  <span class="lt lt-2">Layout2</span><i class="slash s2"></i>
  <span class="ftplus ftplus-s"></span><i class="slash s2"></i>
  <div class="sr">
    <span class="sb modell">MODELL</span>
    <span class="sb w64"><svg><use href="#st-grid"/></svg><svg><use href="#st-dots"/></svg><i class="caret"></i></span>
    <span class="sb on w23"><svg><use href="#st-dyn"/></svg></span>
    <span class="sb on w23"><svg><use href="#st-ortho"/></svg></span>
    <span class="sb w36"><svg><use href="#st-polar"/></svg><i class="caret"></i></span>
    <span class="sb w37"><svg><use href="#st-tr"/></svg><i class="caret"></i></span>
    <span class="sb w21"><svg><use href="#st-ang"/></svg></span>
    <span class="sb on w22"><svg><use href="#st-snap"/></svg></span>
    <span class="sb w13"><i class="caret"></i></span>
    <span class="sb w24"><svg><use href="#st-lines"/></svg></span>
    <span class="sb on w22"><svg><use href="#st-check"/></svg></span>
    <span class="sb w23"><svg><use href="#st-add"/></svg></span>
    <span class="sb w24"><svg><use href="#st-mv"/></svg></span>
    <span class="sb on w23"><svg><use href="#st-gizmo"/></svg></span>
    <span class="sb w14"><i class="caret"></i></span>
    <span class="sb on w23"><svg><use href="#st-an1"/></svg></span>
    <span class="sb w22"><svg><use href="#st-an2"/></svg></span>
    <span class="sb w22"><svg><use href="#st-an3"/></svg></span>
    <span class="sb w30 txt">1:1<i class="caret"></i></span>
    <span class="sb w37"><svg><use href="#st-gear"/></svg><i class="caret"></i></span>
    <span class="sb w24"><svg><use href="#st-plus"/></svg></span>
    <span class="sb w24"><svg><use href="#st-units"/></svg></span>
    <span class="sb w22"><svg><use href="#st-tool"/></svg></span>
    <span class="sb w22"><svg><use href="#st-warn1"/></svg></span>
    <span class="sb w24"><svg><use href="#st-clip"/></svg></span>
    <span class="sb w23"><svg><use href="#st-warn2"/></svg></span>
    <span class="sb w21"><svg><use href="#st-file"/></svg></span>
    <span class="sb w24"><svg><use href="#st-full"/></svg></span>
    <span class="sb w25"><svg><use href="#st-ham"/></svg></span>
  </div>
</footer>

<footer class="taskbar">
  <div class="tsearch"></div>
  <div class="tapps">
    <span class="app-c"><svg class="tv" viewBox="0 0 24 24"><path fill="none" stroke="#fff" stroke-width="1.500" d="M7 1h9M7 22h9M5 7h11v10H5zM21 3v4M21 11v3M21 18v3"/></svg></span>
    <span class="app-c"><svg viewBox="0 0 24 24"><rect width="24" height="24" fill="#0091da"/><path fill="#9fd8f2" d="M7 6h6v3H7zM5 10h14v6H5zM8 15h7v5H8z"/></svg></span>
    <span class="app-c"><svg viewBox="0 0 24 24"><rect width="24" height="24" fill="#333"/><path fill="none" stroke="#9bd41c" stroke-width="3" stroke-dasharray="2 1" d="M18 3H6v18h12v-8h-5"/></svg></span>
    <span class="app-c run"><svg viewBox="0 0 24 24"><use href="#b-chrome"/><text x="16" y="21.500" class="ltr lt9 wh">T</text></svg></span>
    <span class="app-c run"><svg><use href="#b-folder"/></svg></span>
    <span class="app-c run"><svg><use href="#b-edge"/></svg></span>
    <span class="app-c run"><svg viewBox="0 0 24 24"><rect width="24" height="24" rx="6" fill="#2563eb"/><text x="12" y="19" class="ltr lt20 nv">M</text></svg></span>
    <span class="app-c run"><svg viewBox="0 0 24 24"><use href="#b-teams"/><text x="7" y="15" class="ltr lt11 wh">T</text><text x="17" y="21.500" class="ltr lt12 wh">1</text></svg></span>
    <span class="app-c run"><svg viewBox="0 0 24 24"><use href="#b-out"/><text x="7" y="16" class="ltr lt11 wh">O</text></svg></span>
    <span class="app-c run"><svg viewBox="0 0 24 24"><use href="#b-word"/><text x="7.500" y="16" class="ltr lt11 wh">W</text></svg></span>
    <span class="app-c run act"><svg viewBox="0 0 24 24"><use href="#b-cad"/><text x="12" y="13" class="ltr lt13 wh">A</text><text x="12" y="22" class="ltr lt6 wh">P3D</text></svg></span>
    <span class="app-c run"><svg viewBox="0 0 24 24"><use href="#b-one"/><text x="7" y="16" class="ltr lt11 wh">N</text></svg></span>
    <span class="app-c run"><svg><use href="#b-arr"/></svg></span>
    <span class="app-c run"><svg viewBox="0 0 24 24"><use href="#b-ads"/><text x="12" y="13" class="ltr lt13 wh">A</text><text x="12" y="22" class="ltr lt6 wh">ADS</text></svg></span>
  </div>
  <div class="tray">
    <div class="batt"><span>92%</span></div><i class="batt-nub"></i>
    <svg class="plug" viewBox="0 0 10 20"><path fill="#eee" d="M2 1h2v5H2zM6 1h2v5H6zM1 6h8v6l-3 2v5H4v-5l-3-2z"/></svg>
    <span class="weather"><svg viewBox="0 0 26 24"><path fill="#d5dff0" d="M6 22a5 5 0 010-10 7 7 0 0113-1 5.500 5.500 0 011 11z"/></svg><i class="wbadge">1</i></span>
    <span class="wtext">0°C&nbsp;&nbsp;Bewölkt</span>
    <svg class="tic chev-u" viewBox="0 0 16 16"><path fill="none" stroke="#eee" stroke-width="1.300" d="M2 11l6-7 6 7"/></svg>
    <svg class="tic" viewBox="0 0 20 16"><path fill="#1f7fd8" d="M4 14a4 4 0 010-8 6 6 0 0111-1 4.500 4.500 0 012 9z"/></svg>
    <svg class="tic" viewBox="0 0 16 20"><rect x="5" y="1" width="6" height="12" rx="3" fill="#e8e8e8"/><path fill="none" stroke="#e8e8e8" d="M3 9a5 5 0 0010 0M8 14v5M4 19h8"/></svg>
    <svg class="tic" viewBox="0 0 20 20"><path fill="none" stroke="#e8e8e8" d="M2 4l12-3v14L2 18z"/><path fill="none" stroke="#e8e8e8" stroke-width="1.500" d="M10 7a3 3 0 100 5"/><circle cx="15" cy="16" r="4" fill="#2f7fd0"/></svg>
    <svg class="tic" viewBox="0 0 20 16"><path fill="none" stroke="#e8e8e8" d="M6 3h13v11H2V9M2 1v5M5 1v5M1 6h6"/><rect x="8" y="6" width="8" height="6" fill="#e8e8e8"/></svg>
    <svg class="tic" viewBox="0 0 20 20"><path fill="none" stroke="#e8e8e8" d="M2 7h4l5-5v16l-5-5H2zM14 7a4 4 0 010 6M16 4a8 8 0 010 12"/></svg>
    <div class="clock"><span>16:00</span><span>20.01.2025</span></div>
    <span class="notif"><svg viewBox="0 0 20 20"><path fill="#f0f0f0" d="M2 1h16v14H8l-4 4v-4H2z"/><path stroke="#222" d="M5 5h10M5 8h10M5 11h7"/></svg><i class="nbadge">2</i></span>
  </div>
</footer>
</div>
</body>
</html>
```

FILE: styles.css
```css
* { box-sizing: border-box; }
html, body { margin: 0; padding: 0; }
body { width: 2360px; height: 1440px; overflow: hidden; background: #222933; font-family: Roboto, "Liberation Sans", sans-serif; font-size: 12px; color: #e6e6e6; }
.sprite { position: absolute; width: 0; height: 0; overflow: hidden; }
.app { display: flex; flex-direction: column; width: 2360px; height: 1440px; }
svg { display: block; flex: none; }
i { font-style: normal; }

/* letters inside icons */
.ltr { font-family: Roboto, sans-serif; font-weight: 700; text-anchor: middle; }
.lt6 { font-size: 6px; }
.lt9 { font-size: 9px; }
.lt10 { font-size: 10px; }
.lt11 { font-size: 11px; }
.lt12 { font-size: 12px; }
.lt13 { font-size: 13px; }
.lt14 { font-size: 14px; }
.lt20 { font-size: 20px; font-weight: 900; }
.wh { fill: #fff; }
.dk { fill: #444; }
.nv { fill: #0b1e4a; }

/* carets */
.caret { display: inline-block; flex: none; width: 0; height: 0; border-left: 4px solid transparent; border-right: 4px solid transparent; border-top: 5px solid #c9ced6; margin-left: auto; margin-right: 4px; }
.caret-w { border-top-color: #e8e8e8; margin: 0; }
.caret-s { border-left-width: 2.500px; border-right-width: 2.500px; border-top-width: 3.500px; margin: 0; }
.caret-xs { border-left-width: 2.500px; border-right-width: 2.500px; border-top-width: 3px; margin: 0 0 6px 3px; vertical-align: middle; }
.caret-l { margin: 0 0 1px 6px; vertical-align: middle; }
.caret-g { border-top-color: #666; margin: 0 5px 0 4px; }
.caret-k { border-top-color: #111; border-left-width: 2.500px; border-right-width: 2.500px; border-top-width: 4px; margin: 0 0 0 1px; }
.caret-bar { margin: 0; }
.tri-r { display: inline-block; width: 0; height: 0; border-top: 4px solid transparent; border-bottom: 4px solid transparent; border-left: 4px solid #d8d8d8; }
.tri-u { width: 0; height: 0; border-left: 3px solid transparent; border-right: 3px solid transparent; border-bottom: 4px solid #555; }

/* title bar */
.titlebar { height: 28px; flex: none; display: flex; align-items: center; background: #222933; }
.qat { width: 961px; flex: none; display: flex; align-items: center; padding-left: 15px; }
.logo { display: flex; height: 22px; align-items: center; }
.logo-a { width: 17px; height: 22px; background: #d4144a; color: #fff; font-weight: 700; font-size: 13px; text-align: center; line-height: 22px; }
.logo-p { width: 18px; height: 13px; background: #6d0c2a; color: #fff; font-weight: 700; font-size: 7px; text-align: center; line-height: 13px; }
.logo-caret { margin: 0 0 0 4px; }
.q { width: 18px; height: 18px; margin-left: 6px; }
.q-first { margin-left: 14px; }
.q-share { margin-left: 9px; }
.qat .caret-s { margin: 0 3px 0 4px; }
.qat .caret-bar { margin-left: 6px; }
.freigeben { color: #8fcdf5; margin-left: 4px; }
.apptitle { color: #ececec; white-space: nowrap; }
.tright { margin-left: auto; display: flex; align-items: center; }
.tright .tri-r { margin-right: 7px; }
.helpbox { width: 178px; height: 20px; background: #48525f; color: #b9bec6; font-style: italic; line-height: 20px; padding-left: 2px; font-size: 11.500px; white-space: nowrap; }
.ti { width: 16px; height: 16px; }
.ti-search { margin-left: 5px; }
.ti-person { margin-left: 9px; }
.user { margin-left: 5px; color: #e8e8e8; white-space: nowrap; }
.tright .caret-s { margin-left: 4px; }
.ti-cart { margin-left: 10px; }
.ti-ad { margin-left: 8px; }
.vsep { width: 1px; height: 20px; background: #4b5769; margin-left: 10px; }
.ti-help { margin-left: 8px; width: 18px; height: 18px; }
.winbtns { display: flex; align-items: center; width: 206px; margin-left: 0; justify-content: flex-end; }
.wmin { width: 10px; height: 1px; background: #e8e8e8; }
.wrest { width: 9px; height: 11px; border: 1px solid #e8e8e8; box-shadow: 2px -2px 0 -1px #222933, 2px -2px 0 0 #e8e8e8; margin-left: 36px; }
.wclose { color: #e8e8e8; font-size: 13px; margin-left: 36px; margin-right: 17px; line-height: 1; }

/* menu */
.menubar { height: 21px; flex: none; display: flex; align-items: center; gap: 23.250px; padding-left: 14px; background: #222933; border-bottom: 1px solid #3b4453; color: #bfc5cd; }
.winbtns-doc { margin-left: auto; gap: 0; width: auto; }
.winbtns-doc .wrest { margin-left: 22px; }
.winbtns-doc .wclose { margin-left: 22px; margin-right: 10px; }

/* tabs */
.tabs { height: 24px; flex: none; display: flex; align-items: flex-end; padding-left: 4px; background: #222933; color: #bfc5cd; }
.tab { height: 20px; line-height: 20px; padding: 0 9.500px; white-space: nowrap; }
.tab.active { background: #3b4453; color: #fff; width: 49px; padding: 0 0 0 9px; }
.tab:nth-child(15) { margin-left: -4px; }
.tabtoggle { display: flex; align-items: center; height: 20px; margin-left: 20px; gap: 3px; }
.tt-box { width: 15px; height: 11px; background: #e8e8e8; display: flex; align-items: center; justify-content: center; }

/* ribbon */
.ribbon { height: 99px; flex: none; display: flex; background: #3b4453; padding-right: 2px; }
.panel { flex: none; display: flex; flex-direction: column; border-right: 1px solid #2a303b; margin: 1px 0 1px; }
.p-layer { border-right: 0; }
.p-projekt { width: 128px; }
.p-teil { width: 371px; }
.p-ortho { width: 101px; }
.p-komp { width: 87px; }
.p-hoehe { width: 121px; }
.p-gef { width: 130px; }
.p-rohrh { width: 104px; }
.p-app { width: 103px; }
.p-sicht { width: 108px; }
.p-ansicht { width: 206px; }
.p-layer { width: 302px; }
.pbody { flex: 1; display: flex; padding-top: 4px; min-height: 0; }
.plabel { height: 20px; flex: none; text-align: center; line-height: 20px; color: #e6e6e6; white-space: nowrap; }
.big { flex: none; display: flex; flex-direction: column; align-items: center; line-height: 15px; padding-top: 5px; white-space: nowrap; color: #f0f0f0; }
.big > span { display: block; }
.bigi { width: 36px; height: 35px; }
.stack { position: relative; width: 36px; height: 35px; display: block; }
.overstar { position: absolute; right: -6px; top: -2px; width: 18px; height: 18px; }
.pcf { position: absolute; left: -7px; top: -5px; font-size: 11px; line-height: 12px; color: #e0e0e0; }
.w62 { width: 62px; }
.first { margin-left: 7px; }
.w88 { width: 88px; margin-left: 4px; }
.w46 { width: 46px; }
.w100 { width: 100px; }
.w58 { width: 58px; }
.w54 { width: 54px; }
.w56 { width: 56px; }
.w84 { width: 84px; }
.combos { width: 130px; flex: none; display: flex; flex-direction: column; gap: 3px; }
.comborow { display: flex; align-items: center; gap: 5px; }
.combo { display: flex; align-items: center; height: 21px; background: #4b5769; border: 1px solid #2a303b; padding-left: 5px; color: #f0f0f0; white-space: nowrap; flex: none; }
.c127 { width: 127px; }
.c100 { width: 100px; }
.c55 { width: 55px; }
.c115 { width: 115px; padding-left: 3px; }
.c96 { width: 96px; padding-left: 2px; letter-spacing: -.28px; }
.c200 { width: 200px; padding-left: 2px; }
.c208 { width: 208px; padding-left: 2px; }
.dis { background: #3b4453; color: #868d98; border-color: #4b5769; }
.tb { width: 24px; height: 23px; display: flex; align-items: center; justify-content: center; flex: none; }
.tb svg { width: 18px; height: 18px; }
.tb.on { border: 1px solid #7cc6f0; background: #465264; }
.ig { display: grid; grid-auto-rows: 24px; place-items: center; flex: none; }
.ig svg { width: 18px; height: 18px; }
.c30 { grid-template-columns: 30px 30px; width: 57px; }
.c24 { grid-template-columns: 24px 24px; }
.c26 { grid-template-columns: 26px 26px; }
.p-rohrh .ig { margin-left: -5px; }
.p-app .ig { margin-left: -1px; }
.p-sicht .big { margin-left: 2px; }
.p-sicht .ig { margin-left: -3px; }
.sq { width: 23px; }
.komp { display: grid; grid-template-columns: 25px 55px; grid-auto-rows: 24px; gap: 0 3px; padding-left: 2px; align-content: start; }
.k { width: 25px; }
.k2 { width: 24px; height: 21px; margin-left: 3px; margin-top: 2px; }
.stackcol { flex-direction: column; padding: 16px 0 0 3px; }
.hrow { display: flex; align-items: center; }
.inp { height: 21px; border: 1px solid #2a303b; line-height: 17px; padding-left: 3px; background: #37404e; white-space: nowrap; }
.i88 { width: 88px; }
.i48 { width: 48px; }
.i46 { width: 46px; }
.ri { width: 16px; height: 16px; margin-left: 6px; }
.ri-z { margin: 0 3px 0 0; }
.ri-k { margin: 0 3px 0 0; width: 17px; height: 17px; }
.ri-v { margin: 0 5px 0 0; width: 18px; height: 20px; }
.ri-l { margin: 0 3px 0 0; width: 15px; height: 15px; }
.gap7 { margin-top: 7px; }
.gap3 { margin-top: 3px; }
.colon { width: 10px; text-align: center; }
.p-gef .stackcol { padding-left: 4px; }
.p-ansicht .ans { padding: 5px 0 0 3px; }
.vprow { display: flex; align-items: center; height: 20px; padding-left: 4px; margin-top: 5px; white-space: nowrap; }
.lcol { display: flex; flex-direction: column; margin-left: -1px; }
.lcol .combo { margin-top: 1px; }
.swatch { width: 14px; height: 17px; background: #e6efff; margin: 0 4px 0 2px; }
.lrow { display: flex; align-items: center; gap: 5.500px; height: 24px; padding-left: 2px; white-space: nowrap; color: #f0f0f0; }
.lrow:nth-child(2) { margin-top: 2px; }
.lrow svg { width: 18px; height: 18px; }
.lrow span { margin-left: 1px; }

/* file tabs */
.filetabs { height: 26px; flex: none; display: flex; align-items: center; background: #222933; color: #e0e0e0; padding-left: 15px; }
.ham { width: 18px; height: 14px; }
.slash { width: 1px; height: 18px; background: #5a6372; transform: skewX(-18deg); flex: none; margin-left: 12px; }
.ft { white-space: nowrap; margin-left: 11px; }
.ft-active { height: 22px; align-self: flex-end; background: #3b4453; width: 90px; line-height: 22px; margin-left: 8px; padding-left: 16px; font-weight: 700; color: #f5f5f5; clip-path: polygon(6px 0, 100% 0, calc(100% - 6px) 100%, 0 100%); display: flex; justify-content: space-between; padding-right: 10px; }
.ft-active b { font-weight: 400; color: #a9afb9; font-size: 12px; }
.ft-3 { margin-left: 7px; }
.ftplus { width: 15px; height: 15px; flex: none; margin-left: 16px; background: linear-gradient(#e8e8e8, #e8e8e8) center / 15px 2px no-repeat, linear-gradient(#e8e8e8, #e8e8e8) center / 2px 15px no-repeat; }

/* main */
.main { height: 1173px; flex: none; display: flex; background: #3b4453; }
.pm { width: 856px; flex: none; padding-top: 7px; display: flex; flex-direction: column; }
.pm-title { width: 832px; height: 20px; background: #2e3440; border-radius: 3px 3px 0 0; line-height: 20px; padding-left: 15px; color: #e0e0e0; position: relative; flex: none; }
.grip { position: absolute; left: 6px; top: 6px; width: 3px; height: 9px; background: repeating-linear-gradient(#9aa0a8 0 1px, transparent 1px 2px); }
.pm-body { display: flex; flex: 1; }
.pm-left { width: 832px; flex: none; }
.cur { height: 15px; line-height: 15px; padding: 0 0 0 7px; }
.cur-row { display: flex; align-items: center; height: 23px; margin-top: 2px; }
.prj-combo { margin-left: 7px; width: 743px; height: 23px; border: 2px solid #f2f2f2; display: flex; align-items: center; padding-left: 18px; color: #e8e8e8; }
.chev { margin-left: auto; width: 16px; height: 19px; background: #fff; position: relative; display: block; }
.chev::after { content: ""; position: absolute; left: 4px; top: 4px; width: 6px; height: 6px; border-right: 1px solid #555; border-bottom: 1px solid #555; transform: rotate(45deg); }
.pi-p { margin-left: 14px; width: 22px; height: 24px; }
.pi-fly { display: flex; align-items: center; margin-left: 3px; height: 25px; padding-right: 1px; border-right: 1px solid #c5ccd4; border-bottom: 1px solid #c5ccd4; }
.pi-d { width: 17px; height: 22px; }
.sect { margin: 9px 0 0 7px; width: 816px; height: 19px; background: #2e3440; display: flex; align-items: center; padding-left: 9px; border-bottom: 1px solid #c5ccd4; }
.sect b { color: #f0f0f0; }
.sect-d { margin-top: 15px; }
.sect-ic { margin-left: auto; display: flex; align-items: center; gap: 2px; padding-right: 5px; }
.sect-ic svg { width: 15px; height: 15px; }
.tri-mini { width: 0; height: 0; border-left: 2px solid transparent; border-right: 2px solid transparent; border-bottom: 3px solid #c5ccd4; margin-left: 6px; }
.box { margin-left: 7px; width: 816px; border: 1px solid #c5ccd4; border-top: 0; }
.box-tree { height: 521px; padding-top: 8px; }
.findbar { margin: 0 4px 0 5px; height: 21px; background: #4b5769; display: flex; align-items: center; justify-content: center; position: relative; color: #b8c0cb; padding-bottom: 3px; }
.findbar svg { position: absolute; right: 2px; top: 2px; width: 17px; height: 17px; }
.tree { margin-top: 8px; position: relative; }
.row { height: 18px; display: flex; align-items: center; white-space: nowrap; color: #e8e8e8; letter-spacing: -.12px; }
.l0 { padding-left: 7px; }
.l1 { padding-left: 26px; }
.l2 { padding-left: 49px; }
.exp { width: 9px; height: 9px; background: #dfe3e8; color: #1c2430; font-size: 10px; line-height: 8px; text-align: center; font-weight: 700; flex: none; z-index: 1; }
.dh { height: 0; border-top: 1px dotted #c8ccd2; flex: none; }
.d5 { width: 5px; }
.d6 { width: 6px; }
.d11 { width: 11px; }
.ti16 { width: 16px; height: 17px; }
.ti15 { width: 15px; height: 17px; }
.row span { margin-left: 6px; }
.row .sel { background: #fff; color: #111; margin-left: 4px; padding: 0 2px; height: 18px; line-height: 18px; }
.branch { position: relative; }
.b1::before { content: ""; position: absolute; left: 30px; top: -2px; bottom: 9px; border-left: 1px dotted #c8ccd2; }
.b2::before { content: ""; position: absolute; left: 49px; top: 0; bottom: 9px; border-left: 1px dotted #c8ccd2; }
.box-det { height: 500px; padding: 7px 0 0 7px; word-spacing: 1px; }
.box-det p { margin: 0; height: 16px; line-height: 16px; white-space: nowrap; color: #e8e8e8; }
.pm-tabs { width: 24px; flex: none; display: flex; flex-direction: column; }
.vt { width: 20px; height: 122px; margin-left: 1px; background: #2e3440; color: #b4bac4; display: flex; align-items: center; justify-content: center; border-radius: 0 0 3px 0; }
.vt span { writing-mode: vertical-rl; transform: rotate(180deg); white-space: nowrap; }
.vt-on { height: 123px; background: #3b4453; color: #f0f0f0; border-right: 1px solid #7a8594; }
.vt-3 { height: 120px; }

/* work */
.work { flex: 1; display: flex; flex-direction: column; padding: 5px 0 5px 2px; min-width: 0; }
.viewport { height: 988px; flex: none; background: #fff; position: relative; overflow: hidden; }
.vp-label { padding: 6px 0 0 4px; line-height: 14px; color: #333; position: relative; letter-spacing: .08px; }
.canvas { position: absolute; left: 0; top: 0; width: 1502px; height: 988px; }
.zlabel { font-family: Roboto, sans-serif; font-size: 15px; fill: #3e6fb0; }
.dyn { position: absolute; left: 754px; top: 349px; width: 154px; height: 21px; background: #999; border: 1px solid #000; border-left: 0; color: #111; line-height: 19px; padding-left: 1px; white-space: nowrap; }
.dyn-b { position: absolute; right: 4px; top: 4px; width: 11px; height: 11px; }
.ctx { position: absolute; left: 605px; top: 332px; width: 150px; height: 213px; background: #f0f0f0; border: 1px solid #a0a0a0; box-shadow: 3px 3px 3px rgba(0,0,0,.45); padding: 2px; }
.ci { height: 20px; line-height: 22px; padding-left: 25px; color: #111; position: relative; }
.ci.hot { background: #0078d7; color: #fff; }
.ci svg { position: absolute; left: 2px; top: 2px; width: 17px; height: 17px; }
.ci u { text-decoration-thickness: 1px; text-underline-offset: 2px; }
.ctx hr { border: 0; border-top: 1px solid #b9b9b9; margin: 4px 0 4px 2px; width: 141px; height: 1px; }
.tri-k { position: absolute; right: 8px; top: 6px; border-left-color: #111; }
.cmd { margin-top: 4px; height: 171px; flex: none; display: flex; }
.cmd-strip { width: 25px; flex: none; display: flex; flex-direction: column; align-items: center; padding-top: 4px; }
.cmd-grip { width: 15px; height: 5px; background: repeating-linear-gradient(90deg, #d8d8d8 0 1px, transparent 1px 2px); }
.cmd-x { font-size: 13px; line-height: 14px; margin-top: 6px; color: #e8e8e8; font-weight: 700; }
.cmd-w { width: 16px; height: 20px; margin-top: 8px; }
.cmd-main { flex: 1; display: flex; flex-direction: column; min-width: 0; font-family: "DejaVu Sans Mono", "Liberation Mono", monospace; font-size: 11.600px; color: #111; }
.hist { height: 150px; background: #c8c8c8; display: flex; flex-direction: column; justify-content: flex-end; padding: 0 0 0 2px; }
.hist div { height: 15px; line-height: 15px; white-space: pre; }
.cmdline { height: 21px; background: #fff; border-top: 1px solid #222; display: flex; align-items: center; padding-left: 4px; color: #111; }
.cl-i { width: 16px; height: 16px; }
.cl-t { white-space: pre; line-height: 20px; padding-top: 3px; }
.cmdline b { font-weight: 700; }
.kw { background: #cfcfcf; border-radius: 3px; padding: 1px 1px; }
.kw2 { margin-left: 4px; }
.kw em { font-style: normal; color: #00d; }

/* status */
.statusbar { height: 29px; flex: none; display: flex; align-items: flex-start; background: #222933; padding-left: 15px; color: #e0e0e0; }
.ham-s { margin-top: 5px; }
.lt { white-space: nowrap; line-height: 26px; margin-left: 13px; }
.lt-on { width: 71px; height: 24px; margin-left: 9px; background: #3b4453; color: #fff; font-weight: 700; padding-left: 16px; clip-path: polygon(6px 0, 100% 0, calc(100% - 6px) 100%, 0 100%); }
.lt-1 { margin-left: 7px; }
.lt-2 { margin-left: 12px; }
.s2 { margin: 3px 0 0 7px; height: 18px; }
.ftplus-s { margin: 4px 0 0 15px; }
.sr { margin-left: auto; display: flex; gap: 2.750px; align-items: flex-start; padding: 2px 1px 0 0; }
.sb { height: 24px; background: #3b4453; display: flex; align-items: center; justify-content: center; gap: 2px; flex: none; color: #d8dde3; }
.sb svg { width: 17px; height: 17px; }
.sb .caret { margin: 0; }
.sb.on { background: #5d8ec6; }
.modell { width: 53px; color: #d8dde3; }
.w64 { width: 64px; gap: 6px; }
.w23 { width: 23px; }
.w36 { width: 36px; }
.w37 { width: 37px; }
.w22 { width: 22px; }
.w21 { width: 21px; }
.w13 { width: 13px; }
.w14 { width: 14px; }
.w24 { width: 24px; }
.w25 { width: 25px; }
.w30 { width: 30px; }

/* taskbar */
.taskbar { height: 40px; flex: none; display: flex; align-items: stretch; background: #1c1d1f; }
.tsearch { width: 136px; background: #f2f2f2; }
.tapps { display: flex; gap: 9px; padding-left: 4px; }
.app-c { width: 40px; height: 40px; display: flex; align-items: center; justify-content: center; border-bottom: 2px solid transparent; }
.app-c svg { width: 24px; height: 24px; }
.app-c .tv { width: 18px; height: 20px; }
.app-c.run { border-bottom-color: #76b9ed; }
.app-c.act { background: #3a3a3a; }
.tray { margin-left: auto; display: flex; align-items: center; color: #eee; padding-right: 21px; }
.batt { width: 46px; height: 20px; border: 2px solid #fff; background: linear-gradient(90deg, #1e9e4a 92%, #111 92%); color: #fff; text-align: center; line-height: 16px; font-size: 13px; }
.batt-nub { width: 2px; height: 8px; background: #fff; }
.plug { width: 10px; height: 20px; margin-left: 8px; }
.weather { position: relative; width: 26px; height: 24px; margin-left: 84px; }
.weather svg { width: 26px; height: 24px; }
.wbadge { position: absolute; right: -2px; top: -6px; width: 13px; height: 13px; border-radius: 50%; background: #c4271d; color: #fff; font-size: 9px; line-height: 13px; text-align: center; }
.wtext { margin-left: 7px; font-size: 12.500px; white-space: nowrap; }
.tic { width: 18px; height: 18px; margin-left: 6px; }
.chev-u { margin-left: 34px; width: 14px; height: 14px; }
.clock { width: 66px; margin-left: 3px; display: flex; flex-direction: column; align-items: center; line-height: 18px; font-size: 12px; }
.notif { position: relative; width: 20px; height: 20px; margin-left: 12px; }
.notif svg { width: 18px; height: 18px; }
.nbadge { position: absolute; right: -5px; bottom: -6px; width: 15px; height: 15px; border-radius: 50%; background: #444; border: 1px solid #ccc; color: #fff; font-size: 10px; line-height: 13px; text-align: center; }
```
